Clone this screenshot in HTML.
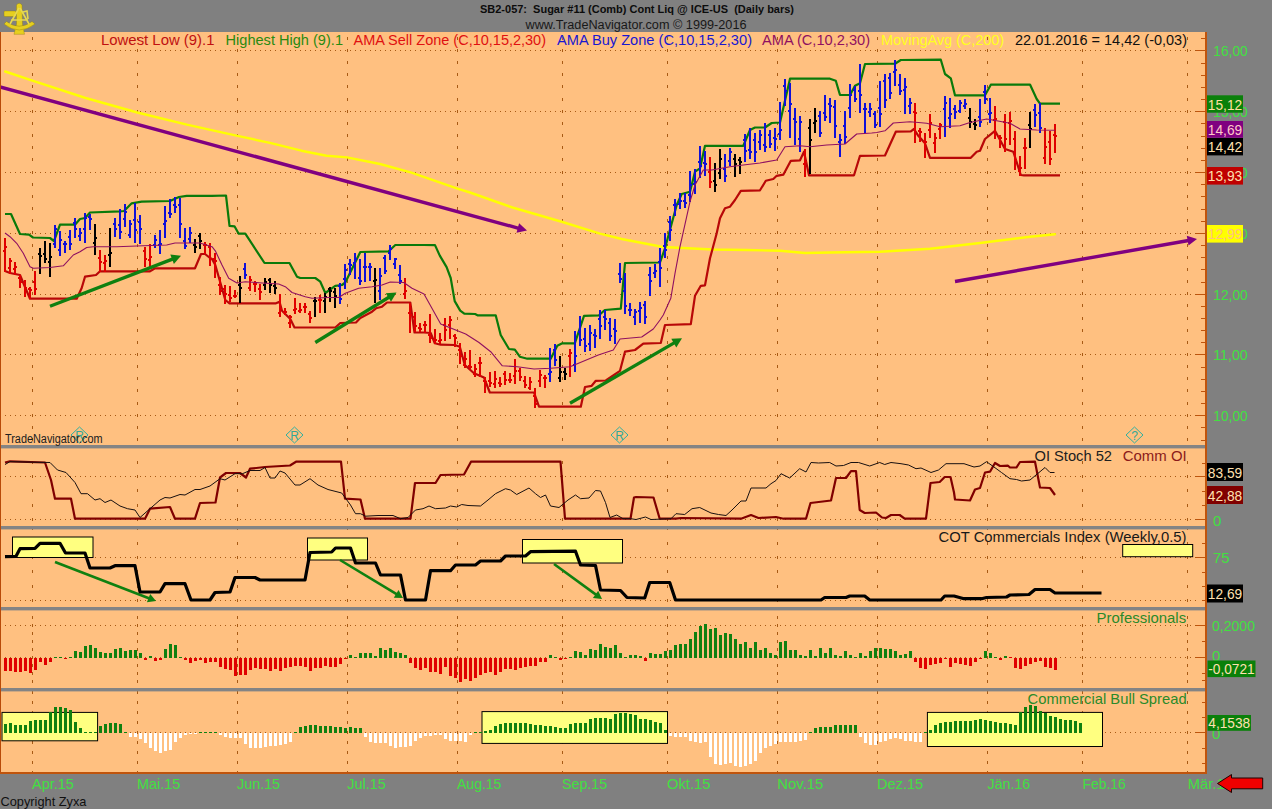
<!DOCTYPE html>
<html><head><meta charset="utf-8"><title>SB2-057: Sugar #11 (Comb) Cont Liq @ ICE-US (Daily bars)</title>
<style>html,body{margin:0;padding:0;background:#808080;overflow:hidden}svg{display:block}</style></head>
<body>
<svg width="1272" height="809" viewBox="0 0 1272 809" font-family="'Liberation Sans', Arial, sans-serif">
<rect width="1272" height="809" fill="#808080"/>
<rect x="0" y="32" width="1207" height="741" fill="#ffc080"/>
<path d="M32.5 36.84V445 M137.5 36.84V445 M237.5 36.84V445 M347.5 36.84V445 M457.5 36.84V445 M562.5 36.84V445 M667.5 36.84V445 M777.5 36.84V445 M877.5 36.84V445 M987.5 36.84V445 M1082.5 36.84V445 M1187.5 36.84V445" stroke="#a85a14" stroke-width="1" stroke-dasharray="3 9.16" fill="none" shape-rendering="crispEdges"/>
<path d="M32.5 460.7V526 M137.5 460.7V526 M237.5 460.7V526 M347.5 460.7V526 M457.5 460.7V526 M562.5 460.7V526 M667.5 460.7V526 M777.5 460.7V526 M877.5 460.7V526 M987.5 460.7V526 M1082.5 460.7V526 M1187.5 460.7V526" stroke="#a85a14" stroke-width="1" stroke-dasharray="3 11.33" fill="none" shape-rendering="crispEdges"/>
<path d="M32.5 527.37V607 M137.5 527.37V607 M237.5 527.37V607 M347.5 527.37V607 M457.5 527.37V607 M562.5 527.37V607 M667.5 527.37V607 M777.5 527.37V607 M877.5 527.37V607 M987.5 527.37V607 M1082.5 527.37V607 M1187.5 527.37V607" stroke="#a85a14" stroke-width="1" stroke-dasharray="3 11.33" fill="none" shape-rendering="crispEdges"/>
<path d="M32.5 616V688 M137.5 616V688 M237.5 616V688 M347.5 616V688 M457.5 616V688 M562.5 616V688 M667.5 616V688 M777.5 616V688 M877.5 616V688 M987.5 616V688 M1082.5 616V688 M1187.5 616V688" stroke="#a85a14" stroke-width="1" stroke-dasharray="3 5" fill="none" shape-rendering="crispEdges"/>
<path d="M32.5 691V772 M137.5 691V772 M237.5 691V772 M347.5 691V772 M457.5 691V772 M562.5 691V772 M667.5 691V772 M777.5 691V772 M877.5 691V772 M987.5 691V772 M1082.5 691V772 M1187.5 691V772" stroke="#a85a14" stroke-width="1" stroke-dasharray="3 7" fill="none" shape-rendering="crispEdges"/>
<path d="M5 50.5H1200 M5 111.5H1200 M5 172.5H1200 M5 233.5H1200 M5 294.5H1200 M5 354.5H1200 M5 415.5H1200 M5 476.5H1200 M5 519.5H1200 M5 557.5H1200 M5 600.5H1200 M5 625.5H1200 M5 657.5H1200 M5 732.5H1200" stroke="#a85a14" stroke-width="1" stroke-dasharray="1 4" fill="none" shape-rendering="crispEdges"/>
<rect x="0" y="445" width="1206" height="3.4" fill="#848484"/>
<rect x="0" y="526" width="1206" height="3.4" fill="#848484"/>
<rect x="0" y="607" width="1206" height="3.4" fill="#848484"/>
<rect x="0" y="688" width="1206" height="3.4" fill="#848484"/>
<rect x="12.5" y="537.0" width="80.5" height="20.5" fill="#ffff80" stroke="#000" stroke-width="1"/>
<rect x="307.5" y="538.0" width="60.0" height="22.0" fill="#ffff80" stroke="#000" stroke-width="1"/>
<rect x="522.5" y="539.5" width="100.0" height="23.5" fill="#ffff80" stroke="#000" stroke-width="1"/>
<rect x="1122.7" y="544.5" width="70.0" height="12.2" fill="#ffff80" stroke="#000" stroke-width="1"/>
<rect x="2.0" y="712.4" width="95.6" height="28.4" fill="#ffff80" stroke="#000" stroke-width="1"/>
<rect x="482.0" y="711.6" width="185.5" height="31.8" fill="#ffff80" stroke="#000" stroke-width="1"/>
<rect x="927.4" y="712.4" width="175.1" height="34.1" fill="#ffff80" stroke="#000" stroke-width="1"/>
<g shape-rendering="crispEdges">
<rect x="4" y="657.5" width="3" height="13.0" fill="#e00000"/>
<rect x="9" y="657.5" width="3" height="13.0" fill="#e00000"/>
<rect x="14" y="657.5" width="3" height="14.0" fill="#e00000"/>
<rect x="19" y="657.5" width="3" height="14.0" fill="#e00000"/>
<rect x="24" y="657.5" width="3" height="13.5" fill="#e00000"/>
<rect x="29" y="657.5" width="3" height="15.5" fill="#e00000"/>
<rect x="34" y="657.5" width="3" height="12.5" fill="#e00000"/>
<rect x="39" y="657.5" width="3" height="4.0" fill="#e00000"/>
<rect x="44" y="657.5" width="3" height="7.0" fill="#e00000"/>
<rect x="49" y="657.5" width="3" height="4.5" fill="#e00000"/>
<rect x="54" y="657.0" width="3" height="1" fill="#108010"/>
<rect x="59" y="657.0" width="3" height="1" fill="#108010"/>
<rect x="64" y="657.5" width="3" height="1.0" fill="#e00000"/>
<rect x="69" y="657.0" width="3" height="1" fill="#108010"/>
<rect x="74" y="650.5" width="3" height="7.0" fill="#108010"/>
<rect x="79" y="652.0" width="3" height="5.5" fill="#108010"/>
<rect x="84" y="646.0" width="3" height="11.5" fill="#108010"/>
<rect x="89" y="644.5" width="3" height="13.0" fill="#108010"/>
<rect x="94" y="647.5" width="3" height="10.0" fill="#108010"/>
<rect x="99" y="652.0" width="3" height="5.5" fill="#108010"/>
<rect x="104" y="653.0" width="3" height="4.5" fill="#108010"/>
<rect x="109" y="652.5" width="3" height="5.0" fill="#108010"/>
<rect x="114" y="648.5" width="3" height="9.0" fill="#108010"/>
<rect x="119" y="647.5" width="3" height="10.0" fill="#108010"/>
<rect x="124" y="650.5" width="3" height="7.0" fill="#108010"/>
<rect x="129" y="649.5" width="3" height="8.0" fill="#108010"/>
<rect x="134" y="649.5" width="3" height="8.0" fill="#108010"/>
<rect x="139" y="653.0" width="3" height="4.5" fill="#108010"/>
<rect x="144" y="657.5" width="3" height="2.0" fill="#e00000"/>
<rect x="149" y="655.5" width="3" height="2.0" fill="#108010"/>
<rect x="154" y="657.5" width="3" height="3.0" fill="#e00000"/>
<rect x="159" y="657.5" width="3" height="2.5" fill="#e00000"/>
<rect x="164" y="648.5" width="3" height="9.0" fill="#108010"/>
<rect x="169" y="643.5" width="3" height="14.0" fill="#108010"/>
<rect x="174" y="644.5" width="3" height="13.0" fill="#108010"/>
<rect x="179" y="656.5" width="3" height="1.0" fill="#108010"/>
<rect x="184" y="657.5" width="3" height="2.5" fill="#e00000"/>
<rect x="189" y="657.5" width="3" height="5.0" fill="#e00000"/>
<rect x="194" y="657.5" width="3" height="3.0" fill="#e00000"/>
<rect x="199" y="657.5" width="3" height="2.5" fill="#e00000"/>
<rect x="204" y="657.5" width="3" height="5.0" fill="#e00000"/>
<rect x="209" y="657.5" width="3" height="4.5" fill="#e00000"/>
<rect x="214" y="657.5" width="3" height="4.0" fill="#e00000"/>
<rect x="219" y="657.5" width="3" height="9.0" fill="#e00000"/>
<rect x="224" y="657.5" width="3" height="11.5" fill="#e00000"/>
<rect x="229" y="657.5" width="3" height="12.5" fill="#e00000"/>
<rect x="234" y="657.5" width="3" height="18.0" fill="#e00000"/>
<rect x="239" y="657.5" width="3" height="17.0" fill="#e00000"/>
<rect x="244" y="657.5" width="3" height="17.0" fill="#e00000"/>
<rect x="249" y="657.5" width="3" height="12.5" fill="#e00000"/>
<rect x="254" y="657.5" width="3" height="10.0" fill="#e00000"/>
<rect x="259" y="657.5" width="3" height="11.5" fill="#e00000"/>
<rect x="264" y="657.5" width="3" height="11.5" fill="#e00000"/>
<rect x="269" y="657.5" width="3" height="13.0" fill="#e00000"/>
<rect x="274" y="657.5" width="3" height="11.0" fill="#e00000"/>
<rect x="279" y="657.5" width="3" height="13.0" fill="#e00000"/>
<rect x="284" y="657.5" width="3" height="10.0" fill="#e00000"/>
<rect x="289" y="657.5" width="3" height="9.0" fill="#e00000"/>
<rect x="294" y="657.5" width="3" height="8.0" fill="#e00000"/>
<rect x="299" y="657.5" width="3" height="8.0" fill="#e00000"/>
<rect x="304" y="657.5" width="3" height="9.0" fill="#e00000"/>
<rect x="309" y="657.5" width="3" height="13.0" fill="#e00000"/>
<rect x="314" y="657.5" width="3" height="10.0" fill="#e00000"/>
<rect x="319" y="657.5" width="3" height="10.0" fill="#e00000"/>
<rect x="324" y="657.5" width="3" height="8.0" fill="#e00000"/>
<rect x="329" y="657.5" width="3" height="9.0" fill="#e00000"/>
<rect x="334" y="657.5" width="3" height="9.0" fill="#e00000"/>
<rect x="339" y="657.5" width="3" height="6.5" fill="#e00000"/>
<rect x="344" y="657.5" width="3" height="1.0" fill="#e00000"/>
<rect x="349" y="654.5" width="3" height="3.0" fill="#108010"/>
<rect x="354" y="656.5" width="3" height="1.0" fill="#108010"/>
<rect x="359" y="652.5" width="3" height="5.0" fill="#108010"/>
<rect x="364" y="652.5" width="3" height="5.0" fill="#108010"/>
<rect x="369" y="652.5" width="3" height="5.0" fill="#108010"/>
<rect x="374" y="655.5" width="3" height="2.0" fill="#108010"/>
<rect x="379" y="647.5" width="3" height="10.0" fill="#108010"/>
<rect x="384" y="649.5" width="3" height="8.0" fill="#108010"/>
<rect x="389" y="647.5" width="3" height="10.0" fill="#108010"/>
<rect x="394" y="651.5" width="3" height="6.0" fill="#108010"/>
<rect x="399" y="652.5" width="3" height="5.0" fill="#108010"/>
<rect x="404" y="655.0" width="3" height="2.5" fill="#108010"/>
<rect x="409" y="657.5" width="3" height="5.0" fill="#e00000"/>
<rect x="414" y="657.5" width="3" height="10.0" fill="#e00000"/>
<rect x="419" y="657.5" width="3" height="12.5" fill="#e00000"/>
<rect x="424" y="657.5" width="3" height="10.0" fill="#e00000"/>
<rect x="429" y="657.5" width="3" height="14.0" fill="#e00000"/>
<rect x="434" y="657.5" width="3" height="14.0" fill="#e00000"/>
<rect x="439" y="657.5" width="3" height="16.0" fill="#e00000"/>
<rect x="444" y="657.5" width="3" height="9.0" fill="#e00000"/>
<rect x="449" y="657.5" width="3" height="18.0" fill="#e00000"/>
<rect x="454" y="657.5" width="3" height="20.0" fill="#e00000"/>
<rect x="459" y="657.5" width="3" height="24.5" fill="#e00000"/>
<rect x="464" y="657.5" width="3" height="21.0" fill="#e00000"/>
<rect x="469" y="657.5" width="3" height="23.0" fill="#e00000"/>
<rect x="474" y="657.5" width="3" height="20.0" fill="#e00000"/>
<rect x="479" y="657.5" width="3" height="17.0" fill="#e00000"/>
<rect x="484" y="657.5" width="3" height="15.5" fill="#e00000"/>
<rect x="489" y="657.5" width="3" height="14.0" fill="#e00000"/>
<rect x="494" y="657.5" width="3" height="17.5" fill="#e00000"/>
<rect x="499" y="657.5" width="3" height="14.0" fill="#e00000"/>
<rect x="504" y="657.5" width="3" height="11.0" fill="#e00000"/>
<rect x="509" y="657.5" width="3" height="11.0" fill="#e00000"/>
<rect x="514" y="657.5" width="3" height="12.5" fill="#e00000"/>
<rect x="519" y="657.5" width="3" height="10.0" fill="#e00000"/>
<rect x="524" y="657.5" width="3" height="9.0" fill="#e00000"/>
<rect x="529" y="657.5" width="3" height="8.0" fill="#e00000"/>
<rect x="534" y="657.5" width="3" height="8.0" fill="#e00000"/>
<rect x="539" y="657.5" width="3" height="4.0" fill="#e00000"/>
<rect x="544" y="657.5" width="3" height="4.5" fill="#e00000"/>
<rect x="549" y="655.0" width="3" height="2.5" fill="#108010"/>
<rect x="554" y="656.5" width="3" height="1.0" fill="#108010"/>
<rect x="559" y="657.5" width="3" height="2.0" fill="#e00000"/>
<rect x="564" y="657.5" width="3" height="1.0" fill="#e00000"/>
<rect x="569" y="656.5" width="3" height="1.0" fill="#108010"/>
<rect x="574" y="651.0" width="3" height="6.5" fill="#108010"/>
<rect x="579" y="652.0" width="3" height="5.5" fill="#108010"/>
<rect x="584" y="654.5" width="3" height="3.0" fill="#108010"/>
<rect x="589" y="648.5" width="3" height="9.0" fill="#108010"/>
<rect x="594" y="649.5" width="3" height="8.0" fill="#108010"/>
<rect x="599" y="643.5" width="3" height="14.0" fill="#108010"/>
<rect x="604" y="646.5" width="3" height="11.0" fill="#108010"/>
<rect x="609" y="647.5" width="3" height="10.0" fill="#108010"/>
<rect x="614" y="645.0" width="3" height="12.5" fill="#108010"/>
<rect x="619" y="652.5" width="3" height="5.0" fill="#108010"/>
<rect x="624" y="656.5" width="3" height="1.0" fill="#108010"/>
<rect x="629" y="654.5" width="3" height="3.0" fill="#108010"/>
<rect x="634" y="654.5" width="3" height="3.0" fill="#108010"/>
<rect x="639" y="655.5" width="3" height="2.0" fill="#108010"/>
<rect x="644" y="657.5" width="3" height="3.0" fill="#e00000"/>
<rect x="649" y="653.0" width="3" height="4.5" fill="#108010"/>
<rect x="654" y="653.5" width="3" height="4.0" fill="#108010"/>
<rect x="659" y="653.5" width="3" height="4.0" fill="#108010"/>
<rect x="664" y="650.5" width="3" height="7.0" fill="#108010"/>
<rect x="669" y="649.5" width="3" height="8.0" fill="#108010"/>
<rect x="674" y="645.0" width="3" height="12.5" fill="#108010"/>
<rect x="679" y="643.5" width="3" height="14.0" fill="#108010"/>
<rect x="684" y="644.0" width="3" height="13.5" fill="#108010"/>
<rect x="689" y="639.0" width="3" height="18.5" fill="#108010"/>
<rect x="694" y="631.5" width="3" height="26.0" fill="#108010"/>
<rect x="699" y="626.0" width="3" height="31.5" fill="#108010"/>
<rect x="704" y="624.0" width="3" height="33.5" fill="#108010"/>
<rect x="709" y="629.0" width="3" height="28.5" fill="#108010"/>
<rect x="714" y="628.0" width="3" height="29.5" fill="#108010"/>
<rect x="719" y="634.5" width="3" height="23.0" fill="#108010"/>
<rect x="724" y="633.0" width="3" height="24.5" fill="#108010"/>
<rect x="729" y="633.5" width="3" height="24.0" fill="#108010"/>
<rect x="734" y="639.0" width="3" height="18.5" fill="#108010"/>
<rect x="739" y="643.5" width="3" height="14.0" fill="#108010"/>
<rect x="744" y="641.5" width="3" height="16.0" fill="#108010"/>
<rect x="749" y="647.5" width="3" height="10.0" fill="#108010"/>
<rect x="754" y="642.0" width="3" height="15.5" fill="#108010"/>
<rect x="759" y="649.5" width="3" height="8.0" fill="#108010"/>
<rect x="764" y="647.5" width="3" height="10.0" fill="#108010"/>
<rect x="769" y="653.0" width="3" height="4.5" fill="#108010"/>
<rect x="774" y="654.5" width="3" height="3.0" fill="#108010"/>
<rect x="779" y="642.0" width="3" height="15.5" fill="#108010"/>
<rect x="784" y="640.5" width="3" height="17.0" fill="#108010"/>
<rect x="789" y="649.5" width="3" height="8.0" fill="#108010"/>
<rect x="794" y="649.5" width="3" height="8.0" fill="#108010"/>
<rect x="799" y="654.5" width="3" height="3.0" fill="#108010"/>
<rect x="804" y="655.5" width="3" height="2.0" fill="#108010"/>
<rect x="809" y="649.5" width="3" height="8.0" fill="#108010"/>
<rect x="814" y="655.5" width="3" height="2.0" fill="#108010"/>
<rect x="819" y="647.5" width="3" height="10.0" fill="#108010"/>
<rect x="824" y="652.5" width="3" height="5.0" fill="#108010"/>
<rect x="829" y="647.5" width="3" height="10.0" fill="#108010"/>
<rect x="834" y="655.0" width="3" height="2.5" fill="#108010"/>
<rect x="839" y="655.5" width="3" height="2.0" fill="#108010"/>
<rect x="844" y="651.0" width="3" height="6.5" fill="#108010"/>
<rect x="849" y="654.5" width="3" height="3.0" fill="#108010"/>
<rect x="854" y="657.0" width="3" height="1" fill="#108010"/>
<rect x="859" y="652.5" width="3" height="5.0" fill="#108010"/>
<rect x="864" y="655.5" width="3" height="2.0" fill="#108010"/>
<rect x="869" y="651.0" width="3" height="6.5" fill="#108010"/>
<rect x="874" y="647.5" width="3" height="10.0" fill="#108010"/>
<rect x="879" y="647.5" width="3" height="10.0" fill="#108010"/>
<rect x="884" y="648.5" width="3" height="9.0" fill="#108010"/>
<rect x="889" y="648.5" width="3" height="9.0" fill="#108010"/>
<rect x="894" y="650.5" width="3" height="7.0" fill="#108010"/>
<rect x="899" y="654.5" width="3" height="3.0" fill="#108010"/>
<rect x="904" y="653.5" width="3" height="4.0" fill="#108010"/>
<rect x="909" y="651.0" width="3" height="6.5" fill="#108010"/>
<rect x="914" y="657.5" width="3" height="4.5" fill="#e00000"/>
<rect x="919" y="657.5" width="3" height="10.0" fill="#e00000"/>
<rect x="924" y="657.5" width="3" height="11.5" fill="#e00000"/>
<rect x="929" y="657.5" width="3" height="7.0" fill="#e00000"/>
<rect x="934" y="657.5" width="3" height="6.5" fill="#e00000"/>
<rect x="939" y="657.5" width="3" height="5.5" fill="#e00000"/>
<rect x="944" y="657.5" width="3" height="1.0" fill="#e00000"/>
<rect x="949" y="657.5" width="3" height="9.0" fill="#e00000"/>
<rect x="954" y="657.5" width="3" height="5.5" fill="#e00000"/>
<rect x="959" y="657.5" width="3" height="6.5" fill="#e00000"/>
<rect x="964" y="657.5" width="3" height="7.0" fill="#e00000"/>
<rect x="969" y="657.5" width="3" height="8.0" fill="#e00000"/>
<rect x="974" y="657.5" width="3" height="4.5" fill="#e00000"/>
<rect x="979" y="657.5" width="3" height="1.0" fill="#e00000"/>
<rect x="984" y="651.0" width="3" height="6.5" fill="#108010"/>
<rect x="989" y="653.0" width="3" height="4.5" fill="#108010"/>
<rect x="994" y="657.0" width="3" height="1" fill="#108010"/>
<rect x="999" y="657.5" width="3" height="2.0" fill="#e00000"/>
<rect x="1004" y="655.5" width="3" height="2.0" fill="#108010"/>
<rect x="1009" y="657.0" width="3" height="1" fill="#e00000"/>
<rect x="1014" y="657.5" width="3" height="10.0" fill="#e00000"/>
<rect x="1019" y="657.5" width="3" height="11.5" fill="#e00000"/>
<rect x="1024" y="657.5" width="3" height="8.0" fill="#e00000"/>
<rect x="1029" y="657.5" width="3" height="6.5" fill="#e00000"/>
<rect x="1034" y="657.5" width="3" height="4.0" fill="#e00000"/>
<rect x="1039" y="657.5" width="3" height="3.0" fill="#e00000"/>
<rect x="1044" y="657.5" width="3" height="9.0" fill="#e00000"/>
<rect x="1049" y="657.5" width="3" height="10.0" fill="#e00000"/>
<rect x="1054" y="657.5" width="3" height="12.5" fill="#e00000"/>
<rect x="4" y="723.5" width="3" height="9.0" fill="#108010"/>
<rect x="9" y="722.5" width="3" height="10.0" fill="#108010"/>
<rect x="14" y="724.5" width="3" height="8.0" fill="#108010"/>
<rect x="19" y="724.5" width="3" height="8.0" fill="#108010"/>
<rect x="24" y="724.5" width="3" height="8.0" fill="#108010"/>
<rect x="29" y="721.0" width="3" height="11.5" fill="#108010"/>
<rect x="34" y="720.0" width="3" height="12.5" fill="#108010"/>
<rect x="39" y="720.0" width="3" height="12.5" fill="#108010"/>
<rect x="44" y="720.0" width="3" height="12.5" fill="#108010"/>
<rect x="49" y="712.0" width="3" height="20.5" fill="#108010"/>
<rect x="54" y="706.5" width="3" height="26.0" fill="#108010"/>
<rect x="59" y="706.5" width="3" height="26.0" fill="#108010"/>
<rect x="64" y="708.0" width="3" height="24.5" fill="#108010"/>
<rect x="69" y="709.5" width="3" height="23.0" fill="#108010"/>
<rect x="74" y="721.5" width="3" height="11.0" fill="#108010"/>
<rect x="79" y="728.0" width="3" height="4.5" fill="#108010"/>
<rect x="84" y="731.5" width="3" height="1.0" fill="#108010"/>
<rect x="89" y="732.0" width="3" height="1" fill="#108010"/>
<rect x="94" y="732.0" width="3" height="1" fill="#108010"/>
<rect x="99" y="725.5" width="3" height="7.0" fill="#108010"/>
<rect x="104" y="723.5" width="3" height="9.0" fill="#108010"/>
<rect x="109" y="722.5" width="3" height="10.0" fill="#108010"/>
<rect x="114" y="722.5" width="3" height="10.0" fill="#108010"/>
<rect x="119" y="723.5" width="3" height="9.0" fill="#108010"/>
<rect x="124" y="732.0" width="3" height="1" fill="#108010"/>
<rect x="129" y="732.5" width="3" height="4.0" fill="#ffffff"/>
<rect x="134" y="732.5" width="3" height="4.5" fill="#ffffff"/>
<rect x="139" y="732.5" width="3" height="6.5" fill="#ffffff"/>
<rect x="144" y="732.5" width="3" height="10.0" fill="#ffffff"/>
<rect x="149" y="732.5" width="3" height="15.5" fill="#ffffff"/>
<rect x="154" y="732.5" width="3" height="18.5" fill="#ffffff"/>
<rect x="159" y="732.5" width="3" height="20.0" fill="#ffffff"/>
<rect x="164" y="732.5" width="3" height="18.5" fill="#ffffff"/>
<rect x="169" y="732.5" width="3" height="17.5" fill="#ffffff"/>
<rect x="174" y="732.5" width="3" height="9.0" fill="#ffffff"/>
<rect x="179" y="732.5" width="3" height="5.0" fill="#ffffff"/>
<rect x="184" y="732.5" width="3" height="2.0" fill="#ffffff"/>
<rect x="189" y="732.5" width="3" height="1.0" fill="#ffffff"/>
<rect x="194" y="732.5" width="3" height="1.0" fill="#ffffff"/>
<rect x="199" y="732.0" width="3" height="1" fill="#108010"/>
<rect x="204" y="732.0" width="3" height="1" fill="#108010"/>
<rect x="209" y="732.0" width="3" height="1" fill="#108010"/>
<rect x="214" y="732.0" width="3" height="1" fill="#108010"/>
<rect x="219" y="732.5" width="3" height="2.5" fill="#ffffff"/>
<rect x="224" y="732.5" width="3" height="4.5" fill="#ffffff"/>
<rect x="229" y="732.5" width="3" height="5.0" fill="#ffffff"/>
<rect x="234" y="732.5" width="3" height="5.0" fill="#ffffff"/>
<rect x="239" y="732.5" width="3" height="5.0" fill="#ffffff"/>
<rect x="244" y="732.5" width="3" height="11.5" fill="#ffffff"/>
<rect x="249" y="732.5" width="3" height="15.0" fill="#ffffff"/>
<rect x="254" y="732.5" width="3" height="15.0" fill="#ffffff"/>
<rect x="259" y="732.5" width="3" height="15.0" fill="#ffffff"/>
<rect x="264" y="732.5" width="3" height="14.0" fill="#ffffff"/>
<rect x="269" y="732.5" width="3" height="13.5" fill="#ffffff"/>
<rect x="274" y="732.5" width="3" height="13.0" fill="#ffffff"/>
<rect x="279" y="732.5" width="3" height="12.5" fill="#ffffff"/>
<rect x="284" y="732.5" width="3" height="11.0" fill="#ffffff"/>
<rect x="289" y="732.5" width="3" height="9.0" fill="#ffffff"/>
<rect x="294" y="732.0" width="3" height="1" fill="#108010"/>
<rect x="299" y="727.0" width="3" height="5.5" fill="#108010"/>
<rect x="304" y="725.5" width="3" height="7.0" fill="#108010"/>
<rect x="309" y="724.5" width="3" height="8.0" fill="#108010"/>
<rect x="314" y="724.5" width="3" height="8.0" fill="#108010"/>
<rect x="319" y="725.5" width="3" height="7.0" fill="#108010"/>
<rect x="324" y="726.0" width="3" height="6.5" fill="#108010"/>
<rect x="329" y="726.0" width="3" height="6.5" fill="#108010"/>
<rect x="334" y="727.0" width="3" height="5.5" fill="#108010"/>
<rect x="339" y="727.0" width="3" height="5.5" fill="#108010"/>
<rect x="344" y="727.5" width="3" height="5.0" fill="#108010"/>
<rect x="349" y="727.0" width="3" height="5.5" fill="#108010"/>
<rect x="354" y="728.0" width="3" height="4.5" fill="#108010"/>
<rect x="359" y="728.0" width="3" height="4.5" fill="#108010"/>
<rect x="364" y="732.5" width="3" height="4.5" fill="#ffffff"/>
<rect x="369" y="732.5" width="3" height="9.0" fill="#ffffff"/>
<rect x="374" y="732.5" width="3" height="10.0" fill="#ffffff"/>
<rect x="379" y="732.5" width="3" height="10.0" fill="#ffffff"/>
<rect x="384" y="732.5" width="3" height="10.0" fill="#ffffff"/>
<rect x="389" y="732.5" width="3" height="13.5" fill="#ffffff"/>
<rect x="394" y="732.5" width="3" height="15.0" fill="#ffffff"/>
<rect x="399" y="732.5" width="3" height="14.0" fill="#ffffff"/>
<rect x="404" y="732.5" width="3" height="14.0" fill="#ffffff"/>
<rect x="409" y="732.5" width="3" height="13.5" fill="#ffffff"/>
<rect x="414" y="732.5" width="3" height="8.0" fill="#ffffff"/>
<rect x="419" y="732.5" width="3" height="5.0" fill="#ffffff"/>
<rect x="424" y="732.5" width="3" height="3.0" fill="#ffffff"/>
<rect x="429" y="732.5" width="3" height="3.0" fill="#ffffff"/>
<rect x="434" y="732.5" width="3" height="2.0" fill="#ffffff"/>
<rect x="439" y="732.5" width="3" height="2.0" fill="#ffffff"/>
<rect x="444" y="732.5" width="3" height="6.5" fill="#ffffff"/>
<rect x="449" y="732.5" width="3" height="8.0" fill="#ffffff"/>
<rect x="454" y="732.5" width="3" height="8.0" fill="#ffffff"/>
<rect x="459" y="732.5" width="3" height="8.0" fill="#ffffff"/>
<rect x="464" y="732.5" width="3" height="9.0" fill="#ffffff"/>
<rect x="469" y="732.5" width="3" height="2.0" fill="#ffffff"/>
<rect x="474" y="732.0" width="3" height="1" fill="#108010"/>
<rect x="479" y="731.5" width="3" height="1.0" fill="#108010"/>
<rect x="484" y="730.5" width="3" height="2.0" fill="#108010"/>
<rect x="489" y="730.0" width="3" height="2.5" fill="#108010"/>
<rect x="494" y="725.5" width="3" height="7.0" fill="#108010"/>
<rect x="499" y="723.5" width="3" height="9.0" fill="#108010"/>
<rect x="504" y="722.5" width="3" height="10.0" fill="#108010"/>
<rect x="509" y="722.5" width="3" height="10.0" fill="#108010"/>
<rect x="514" y="722.5" width="3" height="10.0" fill="#108010"/>
<rect x="519" y="722.5" width="3" height="10.0" fill="#108010"/>
<rect x="524" y="722.5" width="3" height="10.0" fill="#108010"/>
<rect x="529" y="723.5" width="3" height="9.0" fill="#108010"/>
<rect x="534" y="724.5" width="3" height="8.0" fill="#108010"/>
<rect x="539" y="724.5" width="3" height="8.0" fill="#108010"/>
<rect x="544" y="725.5" width="3" height="7.0" fill="#108010"/>
<rect x="549" y="726.0" width="3" height="6.5" fill="#108010"/>
<rect x="554" y="727.0" width="3" height="5.5" fill="#108010"/>
<rect x="559" y="728.0" width="3" height="4.5" fill="#108010"/>
<rect x="564" y="727.5" width="3" height="5.0" fill="#108010"/>
<rect x="569" y="723.5" width="3" height="9.0" fill="#108010"/>
<rect x="574" y="722.5" width="3" height="10.0" fill="#108010"/>
<rect x="579" y="722.5" width="3" height="10.0" fill="#108010"/>
<rect x="584" y="722.5" width="3" height="10.0" fill="#108010"/>
<rect x="589" y="719.0" width="3" height="13.5" fill="#108010"/>
<rect x="594" y="717.5" width="3" height="15.0" fill="#108010"/>
<rect x="599" y="717.5" width="3" height="15.0" fill="#108010"/>
<rect x="604" y="717.5" width="3" height="15.0" fill="#108010"/>
<rect x="609" y="718.5" width="3" height="14.0" fill="#108010"/>
<rect x="614" y="714.0" width="3" height="18.5" fill="#108010"/>
<rect x="619" y="713.0" width="3" height="19.5" fill="#108010"/>
<rect x="624" y="713.0" width="3" height="19.5" fill="#108010"/>
<rect x="629" y="714.0" width="3" height="18.5" fill="#108010"/>
<rect x="634" y="715.0" width="3" height="17.5" fill="#108010"/>
<rect x="639" y="718.5" width="3" height="14.0" fill="#108010"/>
<rect x="644" y="719.0" width="3" height="13.5" fill="#108010"/>
<rect x="649" y="720.0" width="3" height="12.5" fill="#108010"/>
<rect x="654" y="721.5" width="3" height="11.0" fill="#108010"/>
<rect x="659" y="722.5" width="3" height="10.0" fill="#108010"/>
<rect x="664" y="730.0" width="3" height="2.5" fill="#108010"/>
<rect x="669" y="732.5" width="3" height="3.0" fill="#ffffff"/>
<rect x="674" y="732.5" width="3" height="4.0" fill="#ffffff"/>
<rect x="679" y="732.5" width="3" height="4.0" fill="#ffffff"/>
<rect x="684" y="732.5" width="3" height="4.5" fill="#ffffff"/>
<rect x="689" y="732.5" width="3" height="8.0" fill="#ffffff"/>
<rect x="694" y="732.5" width="3" height="9.0" fill="#ffffff"/>
<rect x="699" y="732.5" width="3" height="10.0" fill="#ffffff"/>
<rect x="704" y="732.5" width="3" height="9.0" fill="#ffffff"/>
<rect x="709" y="732.5" width="3" height="24.5" fill="#ffffff"/>
<rect x="714" y="732.5" width="3" height="31.0" fill="#ffffff"/>
<rect x="719" y="732.5" width="3" height="32.0" fill="#ffffff"/>
<rect x="724" y="732.5" width="3" height="31.0" fill="#ffffff"/>
<rect x="729" y="732.5" width="3" height="30.5" fill="#ffffff"/>
<rect x="734" y="732.5" width="3" height="33.5" fill="#ffffff"/>
<rect x="739" y="732.5" width="3" height="34.0" fill="#ffffff"/>
<rect x="744" y="732.5" width="3" height="33.0" fill="#ffffff"/>
<rect x="749" y="732.5" width="3" height="31.0" fill="#ffffff"/>
<rect x="754" y="732.5" width="3" height="28.5" fill="#ffffff"/>
<rect x="759" y="732.5" width="3" height="20.5" fill="#ffffff"/>
<rect x="764" y="732.5" width="3" height="15.0" fill="#ffffff"/>
<rect x="769" y="732.5" width="3" height="13.0" fill="#ffffff"/>
<rect x="774" y="732.5" width="3" height="11.0" fill="#ffffff"/>
<rect x="779" y="732.5" width="3" height="9.0" fill="#ffffff"/>
<rect x="784" y="732.5" width="3" height="9.0" fill="#ffffff"/>
<rect x="789" y="732.5" width="3" height="9.0" fill="#ffffff"/>
<rect x="794" y="732.5" width="3" height="9.0" fill="#ffffff"/>
<rect x="799" y="732.5" width="3" height="8.0" fill="#ffffff"/>
<rect x="804" y="732.5" width="3" height="7.0" fill="#ffffff"/>
<rect x="809" y="732.0" width="3" height="1" fill="#108010"/>
<rect x="814" y="728.0" width="3" height="4.5" fill="#108010"/>
<rect x="819" y="727.0" width="3" height="5.5" fill="#108010"/>
<rect x="824" y="727.0" width="3" height="5.5" fill="#108010"/>
<rect x="829" y="727.0" width="3" height="5.5" fill="#108010"/>
<rect x="834" y="724.5" width="3" height="8.0" fill="#108010"/>
<rect x="839" y="724.5" width="3" height="8.0" fill="#108010"/>
<rect x="844" y="724.5" width="3" height="8.0" fill="#108010"/>
<rect x="849" y="724.5" width="3" height="8.0" fill="#108010"/>
<rect x="854" y="724.5" width="3" height="8.0" fill="#108010"/>
<rect x="859" y="732.5" width="3" height="4.0" fill="#ffffff"/>
<rect x="864" y="732.5" width="3" height="10.0" fill="#ffffff"/>
<rect x="869" y="732.5" width="3" height="12.5" fill="#ffffff"/>
<rect x="874" y="732.5" width="3" height="12.5" fill="#ffffff"/>
<rect x="879" y="732.5" width="3" height="9.0" fill="#ffffff"/>
<rect x="884" y="732.5" width="3" height="8.0" fill="#ffffff"/>
<rect x="889" y="732.5" width="3" height="6.5" fill="#ffffff"/>
<rect x="894" y="732.5" width="3" height="5.5" fill="#ffffff"/>
<rect x="899" y="732.5" width="3" height="6.5" fill="#ffffff"/>
<rect x="904" y="732.5" width="3" height="8.0" fill="#ffffff"/>
<rect x="909" y="732.5" width="3" height="8.0" fill="#ffffff"/>
<rect x="914" y="732.5" width="3" height="9.0" fill="#ffffff"/>
<rect x="919" y="732.5" width="3" height="9.0" fill="#ffffff"/>
<rect x="924" y="732.0" width="3" height="1" fill="#108010"/>
<rect x="929" y="729.5" width="3" height="3.0" fill="#108010"/>
<rect x="934" y="724.5" width="3" height="8.0" fill="#108010"/>
<rect x="939" y="722.5" width="3" height="10.0" fill="#108010"/>
<rect x="944" y="721.5" width="3" height="11.0" fill="#108010"/>
<rect x="949" y="721.5" width="3" height="11.0" fill="#108010"/>
<rect x="954" y="721.0" width="3" height="11.5" fill="#108010"/>
<rect x="959" y="721.0" width="3" height="11.5" fill="#108010"/>
<rect x="964" y="721.0" width="3" height="11.5" fill="#108010"/>
<rect x="969" y="721.0" width="3" height="11.5" fill="#108010"/>
<rect x="974" y="720.0" width="3" height="12.5" fill="#108010"/>
<rect x="979" y="719.0" width="3" height="13.5" fill="#108010"/>
<rect x="984" y="720.0" width="3" height="12.5" fill="#108010"/>
<rect x="989" y="721.0" width="3" height="11.5" fill="#108010"/>
<rect x="994" y="721.5" width="3" height="11.0" fill="#108010"/>
<rect x="999" y="722.5" width="3" height="10.0" fill="#108010"/>
<rect x="1004" y="722.5" width="3" height="10.0" fill="#108010"/>
<rect x="1009" y="723.5" width="3" height="9.0" fill="#108010"/>
<rect x="1014" y="724.5" width="3" height="8.0" fill="#108010"/>
<rect x="1019" y="712.0" width="3" height="20.5" fill="#108010"/>
<rect x="1024" y="706.5" width="3" height="26.0" fill="#108010"/>
<rect x="1029" y="704.5" width="3" height="28.0" fill="#108010"/>
<rect x="1034" y="706.0" width="3" height="26.5" fill="#108010"/>
<rect x="1039" y="710.5" width="3" height="22.0" fill="#108010"/>
<rect x="1044" y="712.5" width="3" height="20.0" fill="#108010"/>
<rect x="1049" y="715.5" width="3" height="17.0" fill="#108010"/>
<rect x="1054" y="717.0" width="3" height="15.5" fill="#108010"/>
<rect x="1059" y="718.5" width="3" height="14.0" fill="#108010"/>
<rect x="1064" y="719.5" width="3" height="13.0" fill="#108010"/>
<rect x="1069" y="720.0" width="3" height="12.5" fill="#108010"/>
<rect x="1074" y="721.0" width="3" height="11.5" fill="#108010"/>
<rect x="1079" y="722.5" width="3" height="10.0" fill="#108010"/>
</g>
<polyline points="5.2,71.5 32.4,80.6 85.6,98.0 137.3,112.5 186.9,124.7 237.5,135.9 270.0,142.8 301.4,150.7 326.6,155.8 347.0,157.4 380.0,164.0 411.5,172.7 427.2,178.2 457.5,188.7 470.0,192.5 512.5,207.5 562.5,222.0 600.0,233.6 621.7,239.0 663.0,247.0 713.0,249.5 747.0,250.0 780.0,250.8 805.0,253.0 830.0,252.5 880.0,251.8 930.0,248.8 980.0,243.0 1030.0,236.8 1055.0,234.2" fill="none" stroke="#ffff00" stroke-width="2.4" stroke-linejoin="round" stroke-linecap="round"/>
<polyline points="5.0,214.0 11.0,214.0 20.0,234.0 29.0,234.7 33.0,237.5 50.0,238.0 54.0,241.0 60.0,224.7 75.0,224.7 80.0,219.0 85.0,218.0 90.0,212.5 120.0,211.3 124.0,211.0 131.7,203.3 141.7,201.7 170.0,201.0 179.0,197.0 186.7,195.8 212.0,195.8 226.0,195.5 229.5,225.8 234.5,226.3 238.7,233.7 245.3,233.7 264.5,263.0 289.5,263.0 297.0,276.7 300.3,278.0 315.3,278.0 320.3,281.7 325.3,293.0 335.3,285.8 342.0,285.0 345.3,282.5 360.3,252.0 388.7,251.3 395.3,245.0 424.0,245.0 435.0,245.1 439.8,255.6 446.6,267.1 450.7,278.0 454.7,301.1 460.2,310.6 464.3,313.6 475.1,314.0 477.9,315.4 495.7,315.3 500.7,335.0 509.0,349.0 514.8,349.7 519.8,356.7 527.3,358.7 550.7,358.7 557.3,345.8 562.3,343.3 574.8,343.3 584.0,315.8 599.0,315.3 604.8,310.0 620.8,308.7 625.0,263.0 660.0,262.5 665.0,248.3 676.7,205.0 681.7,194.0 690.0,191.7 695.0,171.7 700.0,168.3 705.0,145.8 743.3,145.8 750.0,130.0 755.0,127.5 765.0,127.5 771.7,123.0 780.0,122.5 790.0,78.7 830.0,78.7 835.8,80.8 840.0,95.0 850.0,95.0 855.0,85.8 860.0,83.3 865.0,64.0 895.0,63.7 900.8,60.0 940.8,59.7 945.0,74.0 950.8,78.3 955.0,95.3 985.0,95.3 990.8,84.7 1030.0,84.5 1036.7,99.0 1040.0,103.7 1060.0,103.7" fill="none" stroke="#0a7a0a" stroke-width="2.2" stroke-linejoin="round"/>
<polyline points="5.0,271.0 10.0,273.0 20.0,275.0 25.0,287.0 30.0,298.7 76.7,298.7 81.7,288.0 85.0,276.7 96.0,275.0 100.0,271.3 150.0,271.3 155.0,268.3 195.0,268.3 201.0,254.0 205.0,254.0 210.0,258.0 212.0,259.0 215.3,265.0 225.3,300.0 229.5,303.3 276.0,303.3 279.5,301.7 282.0,310.8 290.3,319.0 294.5,327.5 335.3,327.5 340.3,323.0 356.0,322.5 360.3,318.0 372.0,311.7 376.0,308.3 382.0,306.7 387.0,302.5 410.3,302.5 414.5,332.5 424.0,332.5 430.7,333.0 434.8,343.3 440.7,344.7 454.8,345.0 459.8,346.7 464.8,365.0 474.0,373.3 484.0,377.5 489.8,392.5 534.0,392.5 539.0,406.7 580.8,406.7 585.0,387.0 591.7,385.8 595.8,380.8 605.8,380.5 620.0,370.8 625.0,351.7 635.0,350.0 643.3,343.7 660.8,343.0 665.0,325.0 690.8,324.2 695.0,295.8 700.8,285.8 705.0,285.3 710.0,258.3 716.7,233.3 720.0,218.3 725.0,208.3 730.0,206.7 735.0,200.0 740.8,190.8 760.0,190.3 765.8,180.8 773.3,179.0 776.7,175.8 783.3,174.7 790.8,160.8 800.0,160.3 804.0,151.7 809.0,175.3 854.0,175.3 860.0,155.8 885.0,155.5 895.8,131.7 910.8,131.3 914.0,129.0 918.3,135.8 925.0,143.3 930.0,157.8 970.8,157.8 976.7,151.7 980.0,150.8 985.0,139.0 995.0,130.8 1005.0,149.0 1013.3,151.7 1020.8,175.0 1024.0,175.3 1060.0,175.3" fill="none" stroke="#b80808" stroke-width="2.2" stroke-linejoin="round"/>
<g shape-rendering="crispEdges">
<rect x="4" y="238.0" width="2" height="34.0" fill="#e00000"/>
<rect x="3" y="249.8" width="1" height="2" fill="#e00000"/>
<rect x="6" y="245.7" width="1" height="2" fill="#e00000"/>
<rect x="9" y="258.0" width="2" height="16.0" fill="#e00000"/>
<rect x="8" y="266.7" width="1" height="2" fill="#e00000"/>
<rect x="11" y="260.2" width="1" height="2" fill="#e00000"/>
<rect x="14" y="262.0" width="2" height="13.0" fill="#e00000"/>
<rect x="13" y="267.8" width="1" height="2" fill="#e00000"/>
<rect x="16" y="266.3" width="1" height="2" fill="#e00000"/>
<rect x="19" y="275.0" width="2" height="13.0" fill="#e00000"/>
<rect x="18" y="276.5" width="1" height="2" fill="#e00000"/>
<rect x="21" y="280.6" width="1" height="2" fill="#e00000"/>
<rect x="24" y="280.0" width="2" height="17.0" fill="#e00000"/>
<rect x="23" y="282.0" width="1" height="2" fill="#e00000"/>
<rect x="26" y="286.7" width="1" height="2" fill="#e00000"/>
<rect x="29" y="287.0" width="2" height="12.0" fill="#e00000"/>
<rect x="28" y="288.4" width="1" height="2" fill="#e00000"/>
<rect x="31" y="288.6" width="1" height="2" fill="#e00000"/>
<rect x="34" y="271.0" width="2" height="24.0" fill="#e00000"/>
<rect x="33" y="280.7" width="1" height="2" fill="#e00000"/>
<rect x="36" y="287.5" width="1" height="2" fill="#e00000"/>
<rect x="39" y="247.5" width="2" height="26.5" fill="#000000"/>
<rect x="38" y="252.8" width="1" height="2" fill="#000000"/>
<rect x="41" y="254.6" width="1" height="2" fill="#000000"/>
<rect x="44" y="241.0" width="2" height="22.0" fill="#000000"/>
<rect x="43" y="253.0" width="1" height="2" fill="#000000"/>
<rect x="46" y="257.9" width="1" height="2" fill="#000000"/>
<rect x="49" y="242.5" width="2" height="34.5" fill="#000000"/>
<rect x="48" y="260.6" width="1" height="2" fill="#000000"/>
<rect x="51" y="256.3" width="1" height="2" fill="#000000"/>
<rect x="54" y="225.0" width="2" height="22.5" fill="#1010d8"/>
<rect x="53" y="242.8" width="1" height="2" fill="#1010d8"/>
<rect x="56" y="228.1" width="1" height="2" fill="#1010d8"/>
<rect x="59" y="231.0" width="2" height="25.0" fill="#1010d8"/>
<rect x="58" y="248.8" width="1" height="2" fill="#1010d8"/>
<rect x="61" y="238.8" width="1" height="2" fill="#1010d8"/>
<rect x="64" y="241.0" width="2" height="11.5" fill="#1010d8"/>
<rect x="63" y="242.9" width="1" height="2" fill="#1010d8"/>
<rect x="66" y="242.7" width="1" height="2" fill="#1010d8"/>
<rect x="69" y="230.0" width="2" height="20.0" fill="#1010d8"/>
<rect x="68" y="236.3" width="1" height="2" fill="#1010d8"/>
<rect x="71" y="243.4" width="1" height="2" fill="#1010d8"/>
<rect x="74" y="218.0" width="2" height="19.5" fill="#1010d8"/>
<rect x="73" y="222.4" width="1" height="2" fill="#1010d8"/>
<rect x="76" y="227.9" width="1" height="2" fill="#1010d8"/>
<rect x="79" y="228.0" width="2" height="13.0" fill="#1010d8"/>
<rect x="78" y="234.8" width="1" height="2" fill="#1010d8"/>
<rect x="81" y="232.3" width="1" height="2" fill="#1010d8"/>
<rect x="84" y="212.5" width="2" height="30.5" fill="#1010d8"/>
<rect x="83" y="227.8" width="1" height="2" fill="#1010d8"/>
<rect x="86" y="217.4" width="1" height="2" fill="#1010d8"/>
<rect x="89" y="214.0" width="2" height="16.0" fill="#1010d8"/>
<rect x="88" y="216.1" width="1" height="2" fill="#1010d8"/>
<rect x="91" y="217.7" width="1" height="2" fill="#1010d8"/>
<rect x="94" y="224.0" width="2" height="31.0" fill="#000000"/>
<rect x="93" y="242.4" width="1" height="2" fill="#000000"/>
<rect x="96" y="236.9" width="1" height="2" fill="#000000"/>
<rect x="99" y="250.0" width="2" height="22.0" fill="#e00000"/>
<rect x="98" y="257.1" width="1" height="2" fill="#e00000"/>
<rect x="101" y="261.3" width="1" height="2" fill="#e00000"/>
<rect x="104" y="255.0" width="2" height="17.0" fill="#e00000"/>
<rect x="103" y="261.9" width="1" height="2" fill="#e00000"/>
<rect x="106" y="260.1" width="1" height="2" fill="#e00000"/>
<rect x="109" y="227.5" width="2" height="39.5" fill="#000000"/>
<rect x="108" y="254.4" width="1" height="2" fill="#000000"/>
<rect x="111" y="251.8" width="1" height="2" fill="#000000"/>
<rect x="114" y="218.0" width="2" height="19.0" fill="#1010d8"/>
<rect x="113" y="223.1" width="1" height="2" fill="#1010d8"/>
<rect x="116" y="227.5" width="1" height="2" fill="#1010d8"/>
<rect x="119" y="209.0" width="2" height="30.0" fill="#1010d8"/>
<rect x="118" y="223.5" width="1" height="2" fill="#1010d8"/>
<rect x="121" y="230.9" width="1" height="2" fill="#1010d8"/>
<rect x="124" y="204.0" width="2" height="23.0" fill="#1010d8"/>
<rect x="123" y="218.2" width="1" height="2" fill="#1010d8"/>
<rect x="126" y="211.1" width="1" height="2" fill="#1010d8"/>
<rect x="129" y="220.0" width="2" height="18.0" fill="#1010d8"/>
<rect x="128" y="234.1" width="1" height="2" fill="#1010d8"/>
<rect x="131" y="223.2" width="1" height="2" fill="#1010d8"/>
<rect x="134" y="202.5" width="2" height="40.5" fill="#1010d8"/>
<rect x="133" y="219.4" width="1" height="2" fill="#1010d8"/>
<rect x="136" y="229.0" width="1" height="2" fill="#1010d8"/>
<rect x="139" y="215.0" width="2" height="29.0" fill="#1010d8"/>
<rect x="138" y="221.4" width="1" height="2" fill="#1010d8"/>
<rect x="141" y="228.3" width="1" height="2" fill="#1010d8"/>
<rect x="144" y="247.0" width="2" height="20.0" fill="#e00000"/>
<rect x="143" y="249.5" width="1" height="2" fill="#e00000"/>
<rect x="146" y="258.4" width="1" height="2" fill="#e00000"/>
<rect x="149" y="244.0" width="2" height="23.0" fill="#e00000"/>
<rect x="148" y="258.8" width="1" height="2" fill="#e00000"/>
<rect x="151" y="255.7" width="1" height="2" fill="#e00000"/>
<rect x="154" y="235.0" width="2" height="12.5" fill="#1010d8"/>
<rect x="153" y="243.5" width="1" height="2" fill="#1010d8"/>
<rect x="156" y="238.6" width="1" height="2" fill="#1010d8"/>
<rect x="159" y="230.0" width="2" height="24.0" fill="#1010d8"/>
<rect x="158" y="244.3" width="1" height="2" fill="#1010d8"/>
<rect x="161" y="242.6" width="1" height="2" fill="#1010d8"/>
<rect x="164" y="206.0" width="2" height="32.0" fill="#1010d8"/>
<rect x="163" y="222.8" width="1" height="2" fill="#1010d8"/>
<rect x="166" y="220.0" width="1" height="2" fill="#1010d8"/>
<rect x="169" y="199.0" width="2" height="18.5" fill="#1010d8"/>
<rect x="168" y="211.7" width="1" height="2" fill="#1010d8"/>
<rect x="171" y="213.0" width="1" height="2" fill="#1010d8"/>
<rect x="174" y="197.0" width="2" height="16.0" fill="#1010d8"/>
<rect x="173" y="203.7" width="1" height="2" fill="#1010d8"/>
<rect x="176" y="205.8" width="1" height="2" fill="#1010d8"/>
<rect x="179" y="197.5" width="2" height="40.5" fill="#1010d8"/>
<rect x="178" y="204.3" width="1" height="2" fill="#1010d8"/>
<rect x="181" y="222.5" width="1" height="2" fill="#1010d8"/>
<rect x="184" y="227.5" width="2" height="21.5" fill="#1010d8"/>
<rect x="183" y="239.5" width="1" height="2" fill="#1010d8"/>
<rect x="186" y="244.7" width="1" height="2" fill="#1010d8"/>
<rect x="189" y="227.0" width="2" height="16.0" fill="#1010d8"/>
<rect x="188" y="237.6" width="1" height="2" fill="#1010d8"/>
<rect x="191" y="231.6" width="1" height="2" fill="#1010d8"/>
<rect x="194" y="239.0" width="2" height="13.5" fill="#000000"/>
<rect x="193" y="243.7" width="1" height="2" fill="#000000"/>
<rect x="196" y="246.3" width="1" height="2" fill="#000000"/>
<rect x="199" y="233.0" width="2" height="16.0" fill="#000000"/>
<rect x="198" y="234.7" width="1" height="2" fill="#000000"/>
<rect x="201" y="239.6" width="1" height="2" fill="#000000"/>
<rect x="204" y="242.0" width="2" height="12.0" fill="#e00000"/>
<rect x="203" y="244.2" width="1" height="2" fill="#e00000"/>
<rect x="206" y="243.8" width="1" height="2" fill="#e00000"/>
<rect x="209" y="243.0" width="2" height="23.0" fill="#e00000"/>
<rect x="208" y="246.4" width="1" height="2" fill="#e00000"/>
<rect x="211" y="257.8" width="1" height="2" fill="#e00000"/>
<rect x="214" y="253.0" width="2" height="24.5" fill="#e00000"/>
<rect x="213" y="257.9" width="1" height="2" fill="#e00000"/>
<rect x="216" y="259.9" width="1" height="2" fill="#e00000"/>
<rect x="219" y="277.0" width="2" height="18.0" fill="#e00000"/>
<rect x="218" y="283.6" width="1" height="2" fill="#e00000"/>
<rect x="221" y="289.7" width="1" height="2" fill="#e00000"/>
<rect x="224" y="285.0" width="2" height="19.0" fill="#e00000"/>
<rect x="223" y="287.9" width="1" height="2" fill="#e00000"/>
<rect x="226" y="292.8" width="1" height="2" fill="#e00000"/>
<rect x="229" y="286.0" width="2" height="16.0" fill="#e00000"/>
<rect x="228" y="293.6" width="1" height="2" fill="#e00000"/>
<rect x="231" y="297.3" width="1" height="2" fill="#e00000"/>
<rect x="234" y="290.0" width="2" height="8.0" fill="#e00000"/>
<rect x="233" y="294.8" width="1" height="2" fill="#e00000"/>
<rect x="236" y="295.0" width="1" height="2" fill="#e00000"/>
<rect x="239" y="276.0" width="2" height="26.5" fill="#000000"/>
<rect x="238" y="284.1" width="1" height="2" fill="#000000"/>
<rect x="241" y="286.7" width="1" height="2" fill="#000000"/>
<rect x="244" y="263.0" width="2" height="16.0" fill="#1010d8"/>
<rect x="243" y="268.4" width="1" height="2" fill="#1010d8"/>
<rect x="246" y="274.3" width="1" height="2" fill="#1010d8"/>
<rect x="249" y="276.0" width="2" height="15.0" fill="#e00000"/>
<rect x="248" y="287.3" width="1" height="2" fill="#e00000"/>
<rect x="251" y="278.8" width="1" height="2" fill="#e00000"/>
<rect x="254" y="281.0" width="2" height="11.0" fill="#e00000"/>
<rect x="253" y="283.0" width="1" height="2" fill="#e00000"/>
<rect x="256" y="283.4" width="1" height="2" fill="#e00000"/>
<rect x="259" y="284.0" width="2" height="16.0" fill="#e00000"/>
<rect x="258" y="288.0" width="1" height="2" fill="#e00000"/>
<rect x="261" y="290.8" width="1" height="2" fill="#e00000"/>
<rect x="264" y="278.0" width="2" height="12.0" fill="#000000"/>
<rect x="263" y="283.7" width="1" height="2" fill="#000000"/>
<rect x="266" y="281.0" width="1" height="2" fill="#000000"/>
<rect x="269" y="278.0" width="2" height="15.0" fill="#000000"/>
<rect x="268" y="279.3" width="1" height="2" fill="#000000"/>
<rect x="271" y="283.6" width="1" height="2" fill="#000000"/>
<rect x="274" y="281.0" width="2" height="13.0" fill="#000000"/>
<rect x="273" y="285.3" width="1" height="2" fill="#000000"/>
<rect x="276" y="287.1" width="1" height="2" fill="#000000"/>
<rect x="279" y="294.0" width="2" height="23.0" fill="#e00000"/>
<rect x="278" y="311.8" width="1" height="2" fill="#e00000"/>
<rect x="281" y="307.6" width="1" height="2" fill="#e00000"/>
<rect x="284" y="308.0" width="2" height="7.0" fill="#e00000"/>
<rect x="283" y="310.6" width="1" height="2" fill="#e00000"/>
<rect x="286" y="311.1" width="1" height="2" fill="#e00000"/>
<rect x="289" y="315.0" width="2" height="13.0" fill="#e00000"/>
<rect x="288" y="322.1" width="1" height="2" fill="#e00000"/>
<rect x="291" y="316.4" width="1" height="2" fill="#e00000"/>
<rect x="294" y="297.5" width="2" height="16.5" fill="#e00000"/>
<rect x="293" y="309.4" width="1" height="2" fill="#e00000"/>
<rect x="296" y="308.0" width="1" height="2" fill="#e00000"/>
<rect x="299" y="303.0" width="2" height="10.0" fill="#e00000"/>
<rect x="298" y="309.6" width="1" height="2" fill="#e00000"/>
<rect x="301" y="309.1" width="1" height="2" fill="#e00000"/>
<rect x="304" y="302.5" width="2" height="10.0" fill="#e00000"/>
<rect x="303" y="305.7" width="1" height="2" fill="#e00000"/>
<rect x="306" y="305.8" width="1" height="2" fill="#e00000"/>
<rect x="309" y="311.0" width="2" height="11.5" fill="#e00000"/>
<rect x="308" y="312.6" width="1" height="2" fill="#e00000"/>
<rect x="311" y="316.8" width="1" height="2" fill="#e00000"/>
<rect x="314" y="297.0" width="2" height="20.0" fill="#000000"/>
<rect x="313" y="299.9" width="1" height="2" fill="#000000"/>
<rect x="316" y="299.9" width="1" height="2" fill="#000000"/>
<rect x="319" y="295.0" width="2" height="18.0" fill="#e00000"/>
<rect x="318" y="299.3" width="1" height="2" fill="#e00000"/>
<rect x="321" y="298.7" width="1" height="2" fill="#e00000"/>
<rect x="324" y="293.0" width="2" height="20.0" fill="#000000"/>
<rect x="323" y="299.8" width="1" height="2" fill="#000000"/>
<rect x="326" y="295.7" width="1" height="2" fill="#000000"/>
<rect x="329" y="287.0" width="2" height="15.0" fill="#000000"/>
<rect x="328" y="288.3" width="1" height="2" fill="#000000"/>
<rect x="331" y="289.8" width="1" height="2" fill="#000000"/>
<rect x="334" y="287.5" width="2" height="20.0" fill="#000000"/>
<rect x="333" y="290.9" width="1" height="2" fill="#000000"/>
<rect x="336" y="294.6" width="1" height="2" fill="#000000"/>
<rect x="339" y="282.5" width="2" height="21.5" fill="#1010d8"/>
<rect x="338" y="285.1" width="1" height="2" fill="#1010d8"/>
<rect x="341" y="297.9" width="1" height="2" fill="#1010d8"/>
<rect x="344" y="264.0" width="2" height="25.0" fill="#1010d8"/>
<rect x="343" y="277.5" width="1" height="2" fill="#1010d8"/>
<rect x="346" y="269.3" width="1" height="2" fill="#1010d8"/>
<rect x="349" y="259.0" width="2" height="16.0" fill="#1010d8"/>
<rect x="348" y="263.2" width="1" height="2" fill="#1010d8"/>
<rect x="351" y="264.3" width="1" height="2" fill="#1010d8"/>
<rect x="354" y="252.5" width="2" height="26.5" fill="#1010d8"/>
<rect x="353" y="262.2" width="1" height="2" fill="#1010d8"/>
<rect x="356" y="257.8" width="1" height="2" fill="#1010d8"/>
<rect x="359" y="259.0" width="2" height="26.0" fill="#1010d8"/>
<rect x="358" y="277.4" width="1" height="2" fill="#1010d8"/>
<rect x="361" y="280.0" width="1" height="2" fill="#1010d8"/>
<rect x="364" y="253.0" width="2" height="29.0" fill="#1010d8"/>
<rect x="363" y="265.8" width="1" height="2" fill="#1010d8"/>
<rect x="366" y="266.2" width="1" height="2" fill="#1010d8"/>
<rect x="369" y="263.0" width="2" height="18.0" fill="#1010d8"/>
<rect x="368" y="265.8" width="1" height="2" fill="#1010d8"/>
<rect x="371" y="266.0" width="1" height="2" fill="#1010d8"/>
<rect x="374" y="268.0" width="2" height="34.5" fill="#000000"/>
<rect x="373" y="280.4" width="1" height="2" fill="#000000"/>
<rect x="376" y="278.6" width="1" height="2" fill="#000000"/>
<rect x="379" y="267.5" width="2" height="32.5" fill="#1010d8"/>
<rect x="378" y="290.2" width="1" height="2" fill="#1010d8"/>
<rect x="381" y="275.0" width="1" height="2" fill="#1010d8"/>
<rect x="384" y="255.0" width="2" height="19.0" fill="#1010d8"/>
<rect x="383" y="257.2" width="1" height="2" fill="#1010d8"/>
<rect x="386" y="269.5" width="1" height="2" fill="#1010d8"/>
<rect x="389" y="245.0" width="2" height="15.0" fill="#1010d8"/>
<rect x="388" y="251.8" width="1" height="2" fill="#1010d8"/>
<rect x="391" y="247.8" width="1" height="2" fill="#1010d8"/>
<rect x="394" y="257.5" width="2" height="11.5" fill="#1010d8"/>
<rect x="393" y="262.6" width="1" height="2" fill="#1010d8"/>
<rect x="396" y="258.4" width="1" height="2" fill="#1010d8"/>
<rect x="399" y="265.0" width="2" height="19.0" fill="#1010d8"/>
<rect x="398" y="273.9" width="1" height="2" fill="#1010d8"/>
<rect x="401" y="279.9" width="1" height="2" fill="#1010d8"/>
<rect x="404" y="278.0" width="2" height="21.0" fill="#e00000"/>
<rect x="403" y="292.8" width="1" height="2" fill="#e00000"/>
<rect x="406" y="290.4" width="1" height="2" fill="#e00000"/>
<rect x="409" y="303.0" width="2" height="29.5" fill="#e00000"/>
<rect x="408" y="311.8" width="1" height="2" fill="#e00000"/>
<rect x="411" y="314.0" width="1" height="2" fill="#e00000"/>
<rect x="414" y="312.0" width="2" height="20.0" fill="#e00000"/>
<rect x="413" y="316.3" width="1" height="2" fill="#e00000"/>
<rect x="416" y="324.8" width="1" height="2" fill="#e00000"/>
<rect x="419" y="322.5" width="2" height="9.5" fill="#e00000"/>
<rect x="418" y="326.5" width="1" height="2" fill="#e00000"/>
<rect x="421" y="328.1" width="1" height="2" fill="#e00000"/>
<rect x="424" y="321.0" width="2" height="11.5" fill="#e00000"/>
<rect x="423" y="324.4" width="1" height="2" fill="#e00000"/>
<rect x="426" y="323.5" width="1" height="2" fill="#e00000"/>
<rect x="429" y="314.0" width="2" height="28.5" fill="#e00000"/>
<rect x="428" y="333.5" width="1" height="2" fill="#e00000"/>
<rect x="431" y="336.9" width="1" height="2" fill="#e00000"/>
<rect x="434" y="329.0" width="2" height="15.0" fill="#e00000"/>
<rect x="433" y="339.2" width="1" height="2" fill="#e00000"/>
<rect x="436" y="338.7" width="1" height="2" fill="#e00000"/>
<rect x="439" y="332.5" width="2" height="11.5" fill="#e00000"/>
<rect x="438" y="339.8" width="1" height="2" fill="#e00000"/>
<rect x="441" y="339.2" width="1" height="2" fill="#e00000"/>
<rect x="444" y="317.5" width="2" height="23.5" fill="#e00000"/>
<rect x="443" y="323.8" width="1" height="2" fill="#e00000"/>
<rect x="446" y="328.5" width="1" height="2" fill="#e00000"/>
<rect x="449" y="316.0" width="2" height="23.0" fill="#e00000"/>
<rect x="448" y="324.2" width="1" height="2" fill="#e00000"/>
<rect x="451" y="318.9" width="1" height="2" fill="#e00000"/>
<rect x="454" y="334.0" width="2" height="12.7" fill="#e00000"/>
<rect x="453" y="335.2" width="1" height="2" fill="#e00000"/>
<rect x="456" y="337.4" width="1" height="2" fill="#e00000"/>
<rect x="459" y="342.5" width="2" height="21.5" fill="#e00000"/>
<rect x="458" y="348.6" width="1" height="2" fill="#e00000"/>
<rect x="461" y="355.1" width="1" height="2" fill="#e00000"/>
<rect x="464" y="351.7" width="2" height="15.8" fill="#e00000"/>
<rect x="463" y="363.6" width="1" height="2" fill="#e00000"/>
<rect x="466" y="358.0" width="1" height="2" fill="#e00000"/>
<rect x="469" y="350.0" width="2" height="20.0" fill="#e00000"/>
<rect x="468" y="365.1" width="1" height="2" fill="#e00000"/>
<rect x="471" y="365.8" width="1" height="2" fill="#e00000"/>
<rect x="474" y="364.0" width="2" height="12.7" fill="#e00000"/>
<rect x="473" y="373.4" width="1" height="2" fill="#e00000"/>
<rect x="476" y="368.1" width="1" height="2" fill="#e00000"/>
<rect x="479" y="356.7" width="2" height="20.0" fill="#e00000"/>
<rect x="478" y="361.8" width="1" height="2" fill="#e00000"/>
<rect x="481" y="361.9" width="1" height="2" fill="#e00000"/>
<rect x="484" y="376.7" width="2" height="16.3" fill="#e00000"/>
<rect x="483" y="380.4" width="1" height="2" fill="#e00000"/>
<rect x="486" y="380.5" width="1" height="2" fill="#e00000"/>
<rect x="489" y="371.7" width="2" height="15.0" fill="#e00000"/>
<rect x="488" y="379.5" width="1" height="2" fill="#e00000"/>
<rect x="491" y="382.4" width="1" height="2" fill="#e00000"/>
<rect x="494" y="371.0" width="2" height="17.0" fill="#e00000"/>
<rect x="493" y="382.6" width="1" height="2" fill="#e00000"/>
<rect x="496" y="378.3" width="1" height="2" fill="#e00000"/>
<rect x="499" y="376.7" width="2" height="10.0" fill="#e00000"/>
<rect x="498" y="381.8" width="1" height="2" fill="#e00000"/>
<rect x="501" y="382.8" width="1" height="2" fill="#e00000"/>
<rect x="504" y="371.0" width="2" height="14.0" fill="#e00000"/>
<rect x="503" y="372.9" width="1" height="2" fill="#e00000"/>
<rect x="506" y="378.6" width="1" height="2" fill="#e00000"/>
<rect x="509" y="372.5" width="2" height="10.0" fill="#e00000"/>
<rect x="508" y="379.4" width="1" height="2" fill="#e00000"/>
<rect x="511" y="378.5" width="1" height="2" fill="#e00000"/>
<rect x="514" y="359.0" width="2" height="25.0" fill="#e00000"/>
<rect x="513" y="374.9" width="1" height="2" fill="#e00000"/>
<rect x="516" y="370.1" width="1" height="2" fill="#e00000"/>
<rect x="519" y="367.5" width="2" height="13.5" fill="#e00000"/>
<rect x="518" y="370.2" width="1" height="2" fill="#e00000"/>
<rect x="521" y="376.0" width="1" height="2" fill="#e00000"/>
<rect x="524" y="376.0" width="2" height="12.0" fill="#e00000"/>
<rect x="523" y="379.6" width="1" height="2" fill="#e00000"/>
<rect x="526" y="383.5" width="1" height="2" fill="#e00000"/>
<rect x="529" y="376.7" width="2" height="13.3" fill="#e00000"/>
<rect x="528" y="386.7" width="1" height="2" fill="#e00000"/>
<rect x="531" y="381.4" width="1" height="2" fill="#e00000"/>
<rect x="534" y="388.0" width="2" height="19.5" fill="#e00000"/>
<rect x="533" y="395.4" width="1" height="2" fill="#e00000"/>
<rect x="536" y="402.8" width="1" height="2" fill="#e00000"/>
<rect x="539" y="370.0" width="2" height="16.7" fill="#e00000"/>
<rect x="538" y="380.0" width="1" height="2" fill="#e00000"/>
<rect x="541" y="373.5" width="1" height="2" fill="#e00000"/>
<rect x="544" y="375.0" width="2" height="12.5" fill="#e00000"/>
<rect x="543" y="377.0" width="1" height="2" fill="#e00000"/>
<rect x="546" y="377.2" width="1" height="2" fill="#e00000"/>
<rect x="549" y="347.5" width="2" height="34.2" fill="#1010d8"/>
<rect x="548" y="373.3" width="1" height="2" fill="#1010d8"/>
<rect x="551" y="370.9" width="1" height="2" fill="#1010d8"/>
<rect x="554" y="344.0" width="2" height="22.0" fill="#1010d8"/>
<rect x="553" y="348.6" width="1" height="2" fill="#1010d8"/>
<rect x="556" y="359.0" width="1" height="2" fill="#1010d8"/>
<rect x="559" y="356.0" width="2" height="25.7" fill="#000000"/>
<rect x="558" y="376.5" width="1" height="2" fill="#000000"/>
<rect x="561" y="370.7" width="1" height="2" fill="#000000"/>
<rect x="564" y="367.5" width="2" height="12.5" fill="#000000"/>
<rect x="563" y="371.4" width="1" height="2" fill="#000000"/>
<rect x="566" y="373.2" width="1" height="2" fill="#000000"/>
<rect x="569" y="349.0" width="2" height="27.7" fill="#e00000"/>
<rect x="568" y="354.7" width="1" height="2" fill="#e00000"/>
<rect x="571" y="352.4" width="1" height="2" fill="#e00000"/>
<rect x="574" y="331.0" width="2" height="40.7" fill="#1010d8"/>
<rect x="573" y="363.8" width="1" height="2" fill="#1010d8"/>
<rect x="576" y="354.6" width="1" height="2" fill="#1010d8"/>
<rect x="579" y="316.0" width="2" height="30.0" fill="#1010d8"/>
<rect x="578" y="330.6" width="1" height="2" fill="#1010d8"/>
<rect x="581" y="339.1" width="1" height="2" fill="#1010d8"/>
<rect x="584" y="328.0" width="2" height="23.7" fill="#1010d8"/>
<rect x="583" y="337.8" width="1" height="2" fill="#1010d8"/>
<rect x="586" y="345.0" width="1" height="2" fill="#1010d8"/>
<rect x="589" y="325.0" width="2" height="26.0" fill="#1010d8"/>
<rect x="588" y="342.9" width="1" height="2" fill="#1010d8"/>
<rect x="591" y="331.7" width="1" height="2" fill="#1010d8"/>
<rect x="594" y="329.0" width="2" height="18.5" fill="#1010d8"/>
<rect x="593" y="334.0" width="1" height="2" fill="#1010d8"/>
<rect x="596" y="334.6" width="1" height="2" fill="#1010d8"/>
<rect x="599" y="310.0" width="2" height="29.0" fill="#1010d8"/>
<rect x="598" y="318.2" width="1" height="2" fill="#1010d8"/>
<rect x="601" y="325.3" width="1" height="2" fill="#1010d8"/>
<rect x="604" y="310.0" width="2" height="20.0" fill="#1010d8"/>
<rect x="603" y="315.6" width="1" height="2" fill="#1010d8"/>
<rect x="606" y="317.9" width="1" height="2" fill="#1010d8"/>
<rect x="609" y="317.5" width="2" height="23.5" fill="#1010d8"/>
<rect x="608" y="322.2" width="1" height="2" fill="#1010d8"/>
<rect x="611" y="335.0" width="1" height="2" fill="#1010d8"/>
<rect x="614" y="319.0" width="2" height="25.0" fill="#1010d8"/>
<rect x="613" y="327.9" width="1" height="2" fill="#1010d8"/>
<rect x="616" y="329.8" width="1" height="2" fill="#1010d8"/>
<rect x="619" y="262.5" width="2" height="20.5" fill="#1010d8"/>
<rect x="618" y="272.9" width="1" height="2" fill="#1010d8"/>
<rect x="621" y="277.6" width="1" height="2" fill="#1010d8"/>
<rect x="624" y="273.0" width="2" height="41.0" fill="#1010d8"/>
<rect x="623" y="290.2" width="1" height="2" fill="#1010d8"/>
<rect x="626" y="304.5" width="1" height="2" fill="#1010d8"/>
<rect x="629" y="303.0" width="2" height="13.0" fill="#1010d8"/>
<rect x="628" y="308.5" width="1" height="2" fill="#1010d8"/>
<rect x="631" y="308.8" width="1" height="2" fill="#1010d8"/>
<rect x="634" y="309.0" width="2" height="16.0" fill="#1010d8"/>
<rect x="633" y="316.3" width="1" height="2" fill="#1010d8"/>
<rect x="636" y="310.6" width="1" height="2" fill="#1010d8"/>
<rect x="639" y="301.7" width="2" height="20.8" fill="#1010d8"/>
<rect x="638" y="310.2" width="1" height="2" fill="#1010d8"/>
<rect x="641" y="306.5" width="1" height="2" fill="#1010d8"/>
<rect x="644" y="301.0" width="2" height="23.0" fill="#1010d8"/>
<rect x="643" y="303.5" width="1" height="2" fill="#1010d8"/>
<rect x="646" y="316.3" width="1" height="2" fill="#1010d8"/>
<rect x="649" y="266.7" width="2" height="29.3" fill="#1010d8"/>
<rect x="648" y="273.6" width="1" height="2" fill="#1010d8"/>
<rect x="651" y="279.8" width="1" height="2" fill="#1010d8"/>
<rect x="654" y="264.0" width="2" height="13.5" fill="#1010d8"/>
<rect x="653" y="271.9" width="1" height="2" fill="#1010d8"/>
<rect x="656" y="270.3" width="1" height="2" fill="#1010d8"/>
<rect x="659" y="247.5" width="2" height="39.2" fill="#1010d8"/>
<rect x="658" y="261.3" width="1" height="2" fill="#1010d8"/>
<rect x="661" y="266.6" width="1" height="2" fill="#1010d8"/>
<rect x="664" y="232.5" width="2" height="25.5" fill="#1010d8"/>
<rect x="663" y="245.2" width="1" height="2" fill="#1010d8"/>
<rect x="666" y="249.3" width="1" height="2" fill="#1010d8"/>
<rect x="669" y="216.0" width="2" height="25.0" fill="#1010d8"/>
<rect x="668" y="220.6" width="1" height="2" fill="#1010d8"/>
<rect x="671" y="228.6" width="1" height="2" fill="#1010d8"/>
<rect x="674" y="199.0" width="2" height="17.0" fill="#1010d8"/>
<rect x="673" y="203.5" width="1" height="2" fill="#1010d8"/>
<rect x="676" y="203.8" width="1" height="2" fill="#1010d8"/>
<rect x="679" y="192.5" width="2" height="16.5" fill="#1010d8"/>
<rect x="678" y="202.9" width="1" height="2" fill="#1010d8"/>
<rect x="681" y="199.8" width="1" height="2" fill="#1010d8"/>
<rect x="684" y="193.0" width="2" height="14.5" fill="#1010d8"/>
<rect x="683" y="199.9" width="1" height="2" fill="#1010d8"/>
<rect x="686" y="201.9" width="1" height="2" fill="#1010d8"/>
<rect x="689" y="171.0" width="2" height="30.7" fill="#1010d8"/>
<rect x="688" y="194.2" width="1" height="2" fill="#1010d8"/>
<rect x="691" y="184.1" width="1" height="2" fill="#1010d8"/>
<rect x="694" y="169.0" width="2" height="25.0" fill="#1010d8"/>
<rect x="693" y="182.5" width="1" height="2" fill="#1010d8"/>
<rect x="696" y="180.6" width="1" height="2" fill="#1010d8"/>
<rect x="699" y="146.0" width="2" height="32.0" fill="#1010d8"/>
<rect x="698" y="161.3" width="1" height="2" fill="#1010d8"/>
<rect x="701" y="165.3" width="1" height="2" fill="#1010d8"/>
<rect x="704" y="151.0" width="2" height="25.0" fill="#1010d8"/>
<rect x="703" y="161.7" width="1" height="2" fill="#1010d8"/>
<rect x="706" y="163.1" width="1" height="2" fill="#1010d8"/>
<rect x="709" y="156.7" width="2" height="30.8" fill="#e00000"/>
<rect x="708" y="170.6" width="1" height="2" fill="#e00000"/>
<rect x="711" y="180.6" width="1" height="2" fill="#e00000"/>
<rect x="714" y="162.5" width="2" height="29.2" fill="#000000"/>
<rect x="713" y="180.2" width="1" height="2" fill="#000000"/>
<rect x="716" y="183.8" width="1" height="2" fill="#000000"/>
<rect x="719" y="149.0" width="2" height="30.0" fill="#000000"/>
<rect x="718" y="172.3" width="1" height="2" fill="#000000"/>
<rect x="721" y="158.0" width="1" height="2" fill="#000000"/>
<rect x="724" y="154.0" width="2" height="27.7" fill="#1010d8"/>
<rect x="723" y="168.0" width="1" height="2" fill="#1010d8"/>
<rect x="726" y="175.4" width="1" height="2" fill="#1010d8"/>
<rect x="729" y="148.0" width="2" height="18.0" fill="#1010d8"/>
<rect x="728" y="160.3" width="1" height="2" fill="#1010d8"/>
<rect x="731" y="151.4" width="1" height="2" fill="#1010d8"/>
<rect x="734" y="154.0" width="2" height="22.7" fill="#000000"/>
<rect x="733" y="158.3" width="1" height="2" fill="#000000"/>
<rect x="736" y="163.4" width="1" height="2" fill="#000000"/>
<rect x="739" y="156.7" width="2" height="17.3" fill="#000000"/>
<rect x="738" y="159.2" width="1" height="2" fill="#000000"/>
<rect x="741" y="161.2" width="1" height="2" fill="#000000"/>
<rect x="744" y="134.0" width="2" height="27.7" fill="#1010d8"/>
<rect x="743" y="138.6" width="1" height="2" fill="#1010d8"/>
<rect x="746" y="150.1" width="1" height="2" fill="#1010d8"/>
<rect x="749" y="128.0" width="2" height="31.0" fill="#1010d8"/>
<rect x="748" y="148.7" width="1" height="2" fill="#1010d8"/>
<rect x="751" y="151.1" width="1" height="2" fill="#1010d8"/>
<rect x="754" y="132.5" width="2" height="29.2" fill="#1010d8"/>
<rect x="753" y="139.0" width="1" height="2" fill="#1010d8"/>
<rect x="756" y="150.5" width="1" height="2" fill="#1010d8"/>
<rect x="759" y="130.0" width="2" height="20.0" fill="#1010d8"/>
<rect x="758" y="141.2" width="1" height="2" fill="#1010d8"/>
<rect x="761" y="134.0" width="1" height="2" fill="#1010d8"/>
<rect x="764" y="123.0" width="2" height="28.7" fill="#1010d8"/>
<rect x="763" y="144.0" width="1" height="2" fill="#1010d8"/>
<rect x="766" y="145.7" width="1" height="2" fill="#1010d8"/>
<rect x="769" y="130.0" width="2" height="17.5" fill="#1010d8"/>
<rect x="768" y="134.3" width="1" height="2" fill="#1010d8"/>
<rect x="771" y="143.3" width="1" height="2" fill="#1010d8"/>
<rect x="774" y="128.0" width="2" height="23.0" fill="#1010d8"/>
<rect x="773" y="136.9" width="1" height="2" fill="#1010d8"/>
<rect x="776" y="138.3" width="1" height="2" fill="#1010d8"/>
<rect x="779" y="101.7" width="2" height="38.3" fill="#1010d8"/>
<rect x="778" y="133.0" width="1" height="2" fill="#1010d8"/>
<rect x="781" y="128.8" width="1" height="2" fill="#1010d8"/>
<rect x="784" y="79.0" width="2" height="27.0" fill="#1010d8"/>
<rect x="783" y="85.1" width="1" height="2" fill="#1010d8"/>
<rect x="786" y="90.2" width="1" height="2" fill="#1010d8"/>
<rect x="789" y="82.5" width="2" height="55.0" fill="#1010d8"/>
<rect x="788" y="109.6" width="1" height="2" fill="#1010d8"/>
<rect x="791" y="102.8" width="1" height="2" fill="#1010d8"/>
<rect x="794" y="108.0" width="2" height="37.0" fill="#1010d8"/>
<rect x="793" y="117.6" width="1" height="2" fill="#1010d8"/>
<rect x="796" y="120.8" width="1" height="2" fill="#1010d8"/>
<rect x="799" y="116.0" width="2" height="35.7" fill="#1010d8"/>
<rect x="798" y="138.4" width="1" height="2" fill="#1010d8"/>
<rect x="801" y="120.8" width="1" height="2" fill="#1010d8"/>
<rect x="804" y="149.0" width="2" height="27.7" fill="#e00000"/>
<rect x="803" y="162.9" width="1" height="2" fill="#e00000"/>
<rect x="806" y="160.7" width="1" height="2" fill="#e00000"/>
<rect x="809" y="119.0" width="2" height="55.0" fill="#000000"/>
<rect x="808" y="126.9" width="1" height="2" fill="#000000"/>
<rect x="811" y="139.0" width="1" height="2" fill="#000000"/>
<rect x="814" y="108.0" width="2" height="25.0" fill="#000000"/>
<rect x="813" y="121.7" width="1" height="2" fill="#000000"/>
<rect x="816" y="119.7" width="1" height="2" fill="#000000"/>
<rect x="819" y="111.0" width="2" height="25.7" fill="#1010d8"/>
<rect x="818" y="115.0" width="1" height="2" fill="#1010d8"/>
<rect x="821" y="131.6" width="1" height="2" fill="#1010d8"/>
<rect x="824" y="95.0" width="2" height="26.0" fill="#1010d8"/>
<rect x="823" y="112.2" width="1" height="2" fill="#1010d8"/>
<rect x="826" y="115.6" width="1" height="2" fill="#1010d8"/>
<rect x="829" y="98.0" width="2" height="24.5" fill="#1010d8"/>
<rect x="828" y="102.5" width="1" height="2" fill="#1010d8"/>
<rect x="831" y="105.2" width="1" height="2" fill="#1010d8"/>
<rect x="834" y="100.0" width="2" height="37.5" fill="#1010d8"/>
<rect x="833" y="105.7" width="1" height="2" fill="#1010d8"/>
<rect x="836" y="125.1" width="1" height="2" fill="#1010d8"/>
<rect x="839" y="134.0" width="2" height="22.7" fill="#1010d8"/>
<rect x="838" y="140.7" width="1" height="2" fill="#1010d8"/>
<rect x="841" y="138.5" width="1" height="2" fill="#1010d8"/>
<rect x="844" y="111.0" width="2" height="33.0" fill="#1010d8"/>
<rect x="843" y="124.7" width="1" height="2" fill="#1010d8"/>
<rect x="846" y="136.0" width="1" height="2" fill="#1010d8"/>
<rect x="849" y="84.0" width="2" height="33.5" fill="#1010d8"/>
<rect x="848" y="107.2" width="1" height="2" fill="#1010d8"/>
<rect x="851" y="94.1" width="1" height="2" fill="#1010d8"/>
<rect x="854" y="86.0" width="2" height="15.7" fill="#1010d8"/>
<rect x="853" y="89.0" width="1" height="2" fill="#1010d8"/>
<rect x="856" y="97.5" width="1" height="2" fill="#1010d8"/>
<rect x="859" y="64.0" width="2" height="49.0" fill="#1010d8"/>
<rect x="858" y="89.9" width="1" height="2" fill="#1010d8"/>
<rect x="861" y="94.4" width="1" height="2" fill="#1010d8"/>
<rect x="864" y="103.0" width="2" height="29.5" fill="#1010d8"/>
<rect x="863" y="108.3" width="1" height="2" fill="#1010d8"/>
<rect x="866" y="107.6" width="1" height="2" fill="#1010d8"/>
<rect x="869" y="102.5" width="2" height="14.2" fill="#1010d8"/>
<rect x="868" y="110.5" width="1" height="2" fill="#1010d8"/>
<rect x="871" y="107.9" width="1" height="2" fill="#1010d8"/>
<rect x="874" y="111.0" width="2" height="17.0" fill="#1010d8"/>
<rect x="873" y="113.4" width="1" height="2" fill="#1010d8"/>
<rect x="876" y="123.7" width="1" height="2" fill="#1010d8"/>
<rect x="879" y="81.0" width="2" height="45.7" fill="#1010d8"/>
<rect x="878" y="107.2" width="1" height="2" fill="#1010d8"/>
<rect x="881" y="112.5" width="1" height="2" fill="#1010d8"/>
<rect x="884" y="74.0" width="2" height="34.0" fill="#1010d8"/>
<rect x="883" y="80.1" width="1" height="2" fill="#1010d8"/>
<rect x="886" y="98.5" width="1" height="2" fill="#1010d8"/>
<rect x="889" y="72.5" width="2" height="26.5" fill="#1010d8"/>
<rect x="888" y="76.7" width="1" height="2" fill="#1010d8"/>
<rect x="891" y="91.5" width="1" height="2" fill="#1010d8"/>
<rect x="894" y="60.0" width="2" height="26.0" fill="#1010d8"/>
<rect x="893" y="71.2" width="1" height="2" fill="#1010d8"/>
<rect x="896" y="69.1" width="1" height="2" fill="#1010d8"/>
<rect x="899" y="74.0" width="2" height="21.0" fill="#1010d8"/>
<rect x="898" y="84.3" width="1" height="2" fill="#1010d8"/>
<rect x="901" y="89.8" width="1" height="2" fill="#1010d8"/>
<rect x="904" y="78.0" width="2" height="36.0" fill="#1010d8"/>
<rect x="903" y="89.2" width="1" height="2" fill="#1010d8"/>
<rect x="906" y="85.7" width="1" height="2" fill="#1010d8"/>
<rect x="909" y="98.0" width="2" height="16.0" fill="#1010d8"/>
<rect x="908" y="105.3" width="1" height="2" fill="#1010d8"/>
<rect x="911" y="102.1" width="1" height="2" fill="#1010d8"/>
<rect x="914" y="102.5" width="2" height="40.0" fill="#e00000"/>
<rect x="913" y="110.6" width="1" height="2" fill="#e00000"/>
<rect x="916" y="112.0" width="1" height="2" fill="#e00000"/>
<rect x="919" y="128.0" width="2" height="13.7" fill="#e00000"/>
<rect x="918" y="129.5" width="1" height="2" fill="#e00000"/>
<rect x="921" y="131.0" width="1" height="2" fill="#e00000"/>
<rect x="924" y="133.0" width="2" height="25.0" fill="#e00000"/>
<rect x="923" y="141.2" width="1" height="2" fill="#e00000"/>
<rect x="926" y="141.1" width="1" height="2" fill="#e00000"/>
<rect x="929" y="114.0" width="2" height="24.0" fill="#e00000"/>
<rect x="928" y="129.4" width="1" height="2" fill="#e00000"/>
<rect x="931" y="121.5" width="1" height="2" fill="#e00000"/>
<rect x="934" y="133.0" width="2" height="19.5" fill="#e00000"/>
<rect x="933" y="141.8" width="1" height="2" fill="#e00000"/>
<rect x="936" y="137.4" width="1" height="2" fill="#e00000"/>
<rect x="939" y="122.5" width="2" height="16.5" fill="#e00000"/>
<rect x="938" y="128.0" width="1" height="2" fill="#e00000"/>
<rect x="941" y="124.2" width="1" height="2" fill="#e00000"/>
<rect x="944" y="96.0" width="2" height="40.7" fill="#1010d8"/>
<rect x="943" y="108.2" width="1" height="2" fill="#1010d8"/>
<rect x="946" y="101.5" width="1" height="2" fill="#1010d8"/>
<rect x="949" y="98.0" width="2" height="30.0" fill="#1010d8"/>
<rect x="948" y="116.9" width="1" height="2" fill="#1010d8"/>
<rect x="951" y="113.1" width="1" height="2" fill="#1010d8"/>
<rect x="954" y="105.0" width="2" height="14.0" fill="#1010d8"/>
<rect x="953" y="108.0" width="1" height="2" fill="#1010d8"/>
<rect x="956" y="110.8" width="1" height="2" fill="#1010d8"/>
<rect x="959" y="100.0" width="2" height="13.0" fill="#1010d8"/>
<rect x="958" y="109.5" width="1" height="2" fill="#1010d8"/>
<rect x="961" y="101.9" width="1" height="2" fill="#1010d8"/>
<rect x="964" y="99.0" width="2" height="10.0" fill="#1010d8"/>
<rect x="963" y="105.2" width="1" height="2" fill="#1010d8"/>
<rect x="966" y="102.5" width="1" height="2" fill="#1010d8"/>
<rect x="969" y="108.0" width="2" height="19.5" fill="#000000"/>
<rect x="968" y="116.7" width="1" height="2" fill="#000000"/>
<rect x="971" y="121.3" width="1" height="2" fill="#000000"/>
<rect x="974" y="119.0" width="2" height="11.0" fill="#000000"/>
<rect x="973" y="122.7" width="1" height="2" fill="#000000"/>
<rect x="976" y="123.6" width="1" height="2" fill="#000000"/>
<rect x="979" y="99.0" width="2" height="27.7" fill="#1010d8"/>
<rect x="978" y="115.5" width="1" height="2" fill="#1010d8"/>
<rect x="981" y="121.2" width="1" height="2" fill="#1010d8"/>
<rect x="984" y="85.0" width="2" height="19.0" fill="#1010d8"/>
<rect x="983" y="91.4" width="1" height="2" fill="#1010d8"/>
<rect x="986" y="97.9" width="1" height="2" fill="#1010d8"/>
<rect x="989" y="97.5" width="2" height="25.5" fill="#1010d8"/>
<rect x="988" y="112.9" width="1" height="2" fill="#1010d8"/>
<rect x="991" y="111.7" width="1" height="2" fill="#1010d8"/>
<rect x="994" y="106.0" width="2" height="33.0" fill="#e00000"/>
<rect x="993" y="119.3" width="1" height="2" fill="#e00000"/>
<rect x="996" y="118.0" width="1" height="2" fill="#e00000"/>
<rect x="999" y="135.0" width="2" height="12.5" fill="#e00000"/>
<rect x="998" y="136.4" width="1" height="2" fill="#e00000"/>
<rect x="1001" y="137.0" width="1" height="2" fill="#e00000"/>
<rect x="1004" y="114.0" width="2" height="37.7" fill="#e00000"/>
<rect x="1003" y="120.5" width="1" height="2" fill="#e00000"/>
<rect x="1006" y="138.2" width="1" height="2" fill="#e00000"/>
<rect x="1009" y="111.7" width="2" height="33.3" fill="#e00000"/>
<rect x="1008" y="121.7" width="1" height="2" fill="#e00000"/>
<rect x="1011" y="119.5" width="1" height="2" fill="#e00000"/>
<rect x="1014" y="131.0" width="2" height="39.0" fill="#e00000"/>
<rect x="1013" y="138.2" width="1" height="2" fill="#e00000"/>
<rect x="1016" y="158.8" width="1" height="2" fill="#e00000"/>
<rect x="1019" y="156.0" width="2" height="20.0" fill="#e00000"/>
<rect x="1018" y="170.2" width="1" height="2" fill="#e00000"/>
<rect x="1021" y="167.4" width="1" height="2" fill="#e00000"/>
<rect x="1024" y="137.5" width="2" height="31.5" fill="#e00000"/>
<rect x="1023" y="147.4" width="1" height="2" fill="#e00000"/>
<rect x="1026" y="146.6" width="1" height="2" fill="#e00000"/>
<rect x="1029" y="111.7" width="2" height="36.3" fill="#000000"/>
<rect x="1028" y="123.6" width="1" height="2" fill="#000000"/>
<rect x="1031" y="127.8" width="1" height="2" fill="#000000"/>
<rect x="1034" y="104.0" width="2" height="22.7" fill="#1010d8"/>
<rect x="1033" y="108.9" width="1" height="2" fill="#1010d8"/>
<rect x="1036" y="113.5" width="1" height="2" fill="#1010d8"/>
<rect x="1039" y="103.0" width="2" height="30.0" fill="#1010d8"/>
<rect x="1038" y="112.0" width="1" height="2" fill="#1010d8"/>
<rect x="1041" y="126.7" width="1" height="2" fill="#1010d8"/>
<rect x="1044" y="128.0" width="2" height="36.0" fill="#e00000"/>
<rect x="1043" y="156.9" width="1" height="2" fill="#e00000"/>
<rect x="1046" y="146.2" width="1" height="2" fill="#e00000"/>
<rect x="1049" y="131.0" width="2" height="34.0" fill="#e00000"/>
<rect x="1048" y="140.9" width="1" height="2" fill="#e00000"/>
<rect x="1051" y="158.1" width="1" height="2" fill="#e00000"/>
<rect x="1054" y="124.0" width="2" height="29.0" fill="#e00000"/>
<rect x="1053" y="133.6" width="1" height="2" fill="#e00000"/>
<rect x="1056" y="134.6" width="1" height="2" fill="#e00000"/>
</g>
<polyline points="5.0,233.0 10.0,236.7 16.7,243.3 23.3,253.3 30.0,266.7 33.3,268.3 50.0,267.5 63.3,265.8 73.3,255.0 80.0,251.7 86.7,247.5 93.3,246.7 116.7,246.7 143.3,245.8 166.7,245.0 175.0,243.0 200.0,243.0 212.0,246.7 215.3,250.8 222.0,265.0 228.7,278.3 237.0,283.0 245.3,281.7 262.0,283.0 278.7,284.0 285.3,286.7 292.0,292.5 305.3,296.7 312.0,298.3 328.7,297.5 338.7,297.5 345.3,293.3 358.7,288.3 372.0,286.7 382.0,285.0 390.3,282.0 403.7,282.5 412.0,288.3 424.0,294.0 440.7,324.0 465.7,334.0 479.0,342.5 490.7,351.7 502.3,365.8 517.3,366.7 534.0,369.0 550.7,368.3 570.0,366.7 576.7,364.0 598.3,355.0 613.3,350.0 620.0,339.0 641.7,337.0 653.3,329.0 660.0,320.0 663.3,315.0 670.8,298.3 675.0,273.3 680.0,246.7 686.7,216.7 690.0,201.7 695.0,185.0 703.3,170.0 711.7,170.0 730.0,166.7 743.3,165.0 760.0,163.0 776.7,160.0 785.0,146.7 800.0,145.8 810.0,146.7 826.7,145.0 845.0,144.0 856.7,134.0 871.7,133.0 876.7,132.5 885.0,130.8 893.3,123.0 910.0,121.7 926.7,123.3 940.0,126.7 960.0,125.8 970.0,122.5 986.7,119.0 996.7,120.8 1010.0,123.3 1020.0,129.0 1036.7,130.0 1055.0,130.3" fill="none" stroke="#901060" stroke-width="1.1" stroke-linejoin="round"/>
<line x1="0.0" y1="86.9" x2="518.8" y2="228.3" stroke="#800080" stroke-width="3.4"/>
<polygon points="527.0,230.5 516.5,232.8 519.1,223.2" fill="#800080"/>
<line x1="955.0" y1="281.5" x2="1188.6" y2="240.5" stroke="#800080" stroke-width="3.4"/>
<polygon points="1197.0,239.0 1188.5,245.6 1186.8,235.7" fill="#800080"/>
<line x1="50.0" y1="306.3" x2="173.1" y2="258.9" stroke="#108010" stroke-width="3.3"/>
<polygon points="181.0,255.8 173.9,263.9 170.3,254.6" fill="#108010"/>
<line x1="315.3" y1="342.5" x2="389.3" y2="297.0" stroke="#108010" stroke-width="3.3"/>
<polygon points="396.5,292.5 391.0,301.7 385.8,293.2" fill="#108010"/>
<line x1="570.0" y1="403.3" x2="674.6" y2="342.6" stroke="#108010" stroke-width="3.3"/>
<polygon points="682.0,338.3 676.3,347.4 671.3,338.7" fill="#108010"/>
<line x1="55.0" y1="562.0" x2="149.5" y2="598.5" stroke="#108010" stroke-width="2.6"/>
<polygon points="156.0,601.0 146.9,602.3 150.2,593.9" fill="#108010"/>
<line x1="340.0" y1="560.0" x2="397.0" y2="594.4" stroke="#108010" stroke-width="2.6"/>
<polygon points="403.0,598.0 393.8,597.7 398.5,590.0" fill="#108010"/>
<line x1="554.0" y1="564.0" x2="596.3" y2="594.9" stroke="#108010" stroke-width="2.6"/>
<polygon points="602.0,599.0 592.9,597.9 598.2,590.7" fill="#108010"/>
<polyline points="5.0,462.5 10.0,461.3 45.0,462.5 51.0,480.0 55.0,498.7 71.0,498.7 75.0,518.7 145.0,518.7 150.0,508.7 170.0,507.0 175.0,518.7 195.0,518.7 200.0,503.0 215.5,502.5 220.0,477.5 226.0,473.0 240.0,473.0 246.0,477.5 250.0,468.7 265.0,467.0 290.0,465.5 296.0,461.7 318.0,461.7 341.0,461.7 345.0,498.7 360.5,499.5 365.0,518.7 410.5,518.7 415.0,483.0 435.5,483.0 440.5,475.0 464.0,474.5 471.0,461.7 560.5,461.7 565.0,518.7 630.5,518.7 634.0,497.5 636.0,497.0 653.5,497.5 659.7,518.7 676.0,518.7 681.0,518.0 741.0,518.7 751.0,515.0 758.5,518.0 776.0,517.0 783.5,518.7 806.0,518.7 810.5,503.0 831.0,500.5 836.0,478.0 846.0,478.0 851.0,471.2 856.0,471.2 859.7,510.0 864.7,513.0 876.0,512.5 882.0,517.5 886.0,518.0 891.0,515.0 899.7,515.0 904.7,518.7 926.0,518.7 930.5,483.0 939.7,482.0 944.7,477.0 950.5,477.0 954.0,492.5 955.0,499.5 970.0,500.5 975.0,489.5 980.0,488.0 985.0,472.5 990.0,471.7 995.0,463.0 1000.0,466.0 1008.0,465.7 1010.0,467.5 1016.5,467.5 1020.0,462.0 1035.0,461.7 1040.0,487.5 1050.0,488.0 1055.0,495.0" fill="none" stroke="#800000" stroke-width="2.2" stroke-linejoin="round"/>
<polyline points="5.0,464.5 10.0,461.7 50.0,462.5 57.5,470.0 66.0,472.5 75.0,482.5 81.0,493.7 87.5,493.7 95.0,500.0 100.0,498.7 105.0,502.5 111.0,500.0 120.0,506.0 127.5,508.7 135.0,510.0 140.0,517.5 150.0,508.7 160.0,500.0 165.0,497.5 170.0,498.0 180.0,494.5 185.0,495.0 195.0,489.5 200.0,489.5 210.0,486.0 220.0,478.7 225.0,480.0 235.0,473.7 242.5,473.7 250.0,470.5 260.0,470.5 265.0,467.5 270.0,478.0 275.0,478.0 280.0,471.0 285.0,473.0 295.0,485.0 300.0,485.0 310.0,478.7 318.0,485.0 328.0,489.5 341.7,493.0 350.5,505.0 355.5,513.7 360.5,513.7 365.5,516.2 378.0,515.5 393.0,515.5 400.5,518.7 408.0,517.5 415.5,510.0 423.0,508.7 429.0,506.0 435.5,508.7 445.5,508.0 450.5,506.0 456.7,507.0 461.7,504.5 468.0,505.5 480.5,506.0 488.0,500.0 495.5,493.7 505.5,488.7 510.5,490.0 516.7,494.5 529.0,488.0 535.5,493.7 540.5,497.5 545.5,495.0 550.5,506.0 559.0,507.5 568.0,500.0 575.5,495.0 580.5,498.7 589.0,498.0 595.5,490.5 600.5,491.0 605.5,502.5 610.0,517.5 616.7,515.0 623.0,518.7 630.5,518.7 636.0,519.5 645.5,517.0 651.0,519.5 671.0,518.7 676.0,513.7 684.7,514.5 692.0,508.7 699.7,507.5 711.0,513.0 718.5,514.5 726.0,515.5 732.0,510.0 741.0,501.0 746.0,501.0 751.0,488.0 766.0,488.0 771.0,483.7 776.0,480.5 781.0,473.7 789.7,478.0 799.7,468.7 806.0,472.0 811.0,462.5 818.5,463.0 829.7,462.5 836.0,466.0 843.5,465.5 851.0,462.5 858.5,462.5 869.7,466.0 879.7,462.5 884.7,464.5 891.0,462.5 901.0,463.7 908.5,465.0 916.0,468.7 921.0,468.0 931.0,472.5 938.5,470.0 946.0,463.7 954.0,463.7 964.0,463.7 974.0,467.0 980.0,466.0 986.5,461.7 994.0,467.0 1001.5,472.5 1010.0,478.7 1016.5,479.5 1021.5,481.0 1030.0,480.0 1039.0,472.5 1045.0,467.5 1050.0,472.5 1054.5,472.5" fill="none" stroke="#181010" stroke-width="1" stroke-linejoin="round"/>
<polyline points="5.0,556.7 16.0,556.3 20.0,548.7 35.0,548.3 40.0,543.3 60.0,543.3 65.5,553.0 85.0,553.0 90.0,568.0 110.0,568.0 115.0,565.7 135.0,565.7 140.0,592.0 160.0,592.0 165.0,583.7 185.0,583.7 191.0,600.0 210.0,600.0 215.0,592.5 230.0,592.0 235.0,577.5 255.0,577.5 260.0,580.0 305.0,580.0 310.0,552.5 331.7,552.0 335.5,548.0 350.5,548.0 355.5,563.0 375.5,563.0 380.5,575.0 400.5,575.0 405.5,600.0 425.5,600.0 430.5,570.7 450.5,570.7 455.5,565.0 475.5,565.0 480.5,561.0 500.5,561.0 505.5,556.0 525.5,556.0 530.5,551.7 575.5,551.2 580.5,565.0 595.5,565.5 600.5,590.0 620.5,590.5 627.0,597.5 644.7,598.0 649.7,582.5 669.7,582.5 675.5,600.0 821.0,600.0 824.7,597.5 846.0,597.5 849.7,596.0 864.7,596.0 869.7,600.0 941.0,600.0 944.7,596.0 954.0,596.0 964.0,598.7 981.5,598.7 986.5,597.5 1006.5,597.0 1010.0,595.0 1029.0,594.5 1035.0,589.5 1050.0,589.5 1055.0,593.0 1101.5,593.0" fill="none" stroke="#000" stroke-width="3.2" stroke-linejoin="round"/>
<rect x="0" y="32" width="1" height="742" fill="#b84a08"/>
<rect x="0" y="772" width="1207" height="2" fill="#c0540c"/>
<rect x="1205" y="32" width="2" height="742" fill="#c0540c"/>
<path d="M1201 38.5H1205 M1196 50.5H1205 M1201 63.5H1205 M1201 75.5H1205 M1201 87.5H1205 M1201 99.5H1205 M1196 111.5H1205 M1201 123.5H1205 M1201 136.5H1205 M1201 148.5H1205 M1201 160.5H1205 M1196 172.5H1205 M1201 184.5H1205 M1201 196.5H1205 M1201 209.5H1205 M1201 221.5H1205 M1196 233.5H1205 M1201 245.5H1205 M1201 257.5H1205 M1201 269.5H1205 M1201 282.5H1205 M1196 294.5H1205 M1201 306.5H1205 M1201 318.5H1205 M1201 330.5H1205 M1201 342.5H1205 M1196 354.5H1205 M1201 367.5H1205 M1201 379.5H1205 M1201 391.5H1205 M1201 403.5H1205 M1196 415.5H1205 M1201 427.5H1205 M1201 440.5H1205 M1202 463.5H1205 M1196 476.5H1205 M1202 491.5H1205 M1202 505.5H1205 M1196 519.5H1205 M1202 543.5H1205 M1196 557.5H1205 M1202 572.5H1205 M1202 586.5H1205 M1202 600.5H1205 M1196 625.5H1205 M1202 641.5H1205 M1196 657.5H1205 M1202 673.5H1205 M1202 680.5H1205 M1202 702.5H1205 M1202 717.5H1205 M1196 732.5H1205 M1202 748.5H1205 M1202 763.5H1205" stroke="#c0540c" stroke-width="1.4" fill="none" shape-rendering="crispEdges"/>
<polygon points="79.5,427 88.0,435 79.5,443 71.0,435" fill="none" stroke="#30b0a0" stroke-width="1"/>
<text x="79.5" y="439.5" font-size="12" fill="#30a898" text-anchor="middle">R</text>
<polygon points="294.5,427 303.0,435 294.5,443 286.0,435" fill="none" stroke="#30b0a0" stroke-width="1"/>
<text x="294.5" y="439.5" font-size="12" fill="#30a898" text-anchor="middle">R</text>
<polygon points="619.5,427 628.0,435 619.5,443 611.0,435" fill="none" stroke="#30b0a0" stroke-width="1"/>
<text x="619.5" y="439.5" font-size="12" fill="#30a898" text-anchor="middle">R</text>
<polygon points="1134.5,427 1143.0,435 1134.5,443 1126.0,435" fill="none" stroke="#30b0a0" stroke-width="1"/>
<text x="1134.5" y="439.5" font-size="12" fill="#30a898" text-anchor="middle">?</text>
<text x="480.0" y="12.8" font-size="11" fill="#0c0c0c" text-anchor="start" textLength="314.0" lengthAdjust="spacingAndGlyphs" font-weight="bold" xml:space="preserve">SB2-057:  Sugar #11 (Comb) Cont Liq @ ICE-US  (Daily bars)</text>
<text x="525.5" y="28.5" font-size="12.5" fill="#181818" text-anchor="start" textLength="221.0" lengthAdjust="spacingAndGlyphs">www.TradeNavigator.com © 1999-2016</text>
<text x="101.0" y="44.5" font-size="15" fill="#c01010" text-anchor="start" textLength="113.5" lengthAdjust="spacingAndGlyphs">Lowest Low (9).1</text>
<text x="225.5" y="44.5" font-size="15" fill="#2a8a10" text-anchor="start" textLength="117.5" lengthAdjust="spacingAndGlyphs">Highest High (9).1</text>
<text x="353.5" y="44.5" font-size="15" fill="#e01010" text-anchor="start" textLength="192.5" lengthAdjust="spacingAndGlyphs">AMA Sell Zone (C,10,15,2,30)</text>
<text x="557.0" y="44.5" font-size="15" fill="#1818d0" text-anchor="start" textLength="195.0" lengthAdjust="spacingAndGlyphs">AMA Buy Zone (C,10,15,2,30)</text>
<text x="762.0" y="44.5" font-size="15" fill="#901060" text-anchor="start" textLength="108.0" lengthAdjust="spacingAndGlyphs">AMA (C,10,2,30)</text>
<text x="881.0" y="44.5" font-size="15" fill="#ffff20" text-anchor="start" textLength="123.0" lengthAdjust="spacingAndGlyphs">MovingAvg (C,200)</text>
<text x="1015.0" y="44.5" font-size="15" fill="#101010" text-anchor="start" textLength="172.0" lengthAdjust="spacingAndGlyphs">22.01.2016 = 14,42 (-0,03)</text>
<text x="5.0" y="443.0" font-size="12.5" fill="#202020" text-anchor="start" textLength="97.5" lengthAdjust="spacingAndGlyphs">TradeNavigator.com</text>
<text x="1034.5" y="461.0" font-size="15" fill="#202020" text-anchor="start" textLength="77.5" lengthAdjust="spacingAndGlyphs">OI Stoch 52</text>
<text x="1122.7" y="461.0" font-size="15" fill="#8b1a1a" text-anchor="start" textLength="64.0" lengthAdjust="spacingAndGlyphs">Comm OI</text>
<text x="938.5" y="542.0" font-size="15" fill="#181818" text-anchor="start" textLength="248.0" lengthAdjust="spacingAndGlyphs">COT Commercials Index (Weekly,0.5)</text>
<text x="1096.6" y="623.0" font-size="15" fill="#2a8a2a" text-anchor="start" textLength="89.5" lengthAdjust="spacingAndGlyphs">Professionals</text>
<text x="1027.6" y="703.5" font-size="15" fill="#2a8a2a" text-anchor="start" textLength="159.0" lengthAdjust="spacingAndGlyphs">Commercial Bull Spread</text>
<text x="1213.3" y="55.8" font-size="15" fill="#40e040" text-anchor="start" textLength="34.4" lengthAdjust="spacingAndGlyphs">16,00</text>
<text x="1213.3" y="116.8" font-size="15" fill="#40e040" text-anchor="start" textLength="34.4" lengthAdjust="spacingAndGlyphs">15,00</text>
<text x="1213.3" y="177.8" font-size="15" fill="#40e040" text-anchor="start" textLength="34.4" lengthAdjust="spacingAndGlyphs">14,00</text>
<text x="1213.3" y="238.8" font-size="15" fill="#40e040" text-anchor="start" textLength="34.4" lengthAdjust="spacingAndGlyphs">13,00</text>
<text x="1213.3" y="299.8" font-size="15" fill="#40e040" text-anchor="start" textLength="34.4" lengthAdjust="spacingAndGlyphs">12,00</text>
<text x="1213.3" y="359.8" font-size="15" fill="#40e040" text-anchor="start" textLength="34.4" lengthAdjust="spacingAndGlyphs">11,00</text>
<text x="1213.3" y="420.8" font-size="15" fill="#40e040" text-anchor="start" textLength="34.4" lengthAdjust="spacingAndGlyphs">10,00</text>
<text x="1213.0" y="525.8" font-size="15" fill="#40e040" text-anchor="start">0</text>
<text x="1213.0" y="563.3" font-size="15" fill="#40e040" text-anchor="start">75</text>
<text x="1212.0" y="631.0" font-size="15" fill="#40e040" text-anchor="start" textLength="43.0" lengthAdjust="spacingAndGlyphs">0,2000</text>
<text x="1212.0" y="661.0" font-size="15" fill="#40e040" text-anchor="start">0</text>
<text x="1212.0" y="739.0" font-size="15" fill="#40e040" text-anchor="start">0</text>
<rect x="1207" y="95.3" width="36" height="17.4" fill="#0a800a"/>
<text x="1207.8" y="109.5" font-size="15" fill="#ffe0a0" text-anchor="start" textLength="34.4" lengthAdjust="spacingAndGlyphs">15,12</text>
<rect x="1207" y="121" width="36" height="16.8" fill="#800080"/>
<text x="1207.8" y="134.6" font-size="15" fill="#ffc8c8" text-anchor="start" textLength="34.4" lengthAdjust="spacingAndGlyphs">14,69</text>
<rect x="1207" y="138" width="36" height="17.4" fill="#000000"/>
<text x="1207.8" y="152.2" font-size="15" fill="#ffe0b0" text-anchor="start" textLength="34.4" lengthAdjust="spacingAndGlyphs">14,42</text>
<rect x="1207" y="167" width="36" height="17.6" fill="#c00000"/>
<text x="1207.8" y="181.4" font-size="15" fill="#ffe0b0" text-anchor="start" textLength="34.4" lengthAdjust="spacingAndGlyphs">13,93</text>
<rect x="1207" y="225" width="36" height="17.6" fill="#ffff00"/>
<text x="1207.8" y="239.4" font-size="15" fill="#ffc080" text-anchor="start" textLength="34.4" lengthAdjust="spacingAndGlyphs">12,99</text>
<rect x="1207" y="463" width="36" height="18" fill="#000000"/>
<text x="1207.8" y="477.8" font-size="15" fill="#ffe0b0" text-anchor="start" textLength="34.4" lengthAdjust="spacingAndGlyphs">83,59</text>
<rect x="1207" y="486" width="36" height="18" fill="#800000"/>
<text x="1207.8" y="500.8" font-size="15" fill="#ffe0b0" text-anchor="start" textLength="34.4" lengthAdjust="spacingAndGlyphs">42,88</text>
<rect x="1207" y="584.5" width="36" height="18" fill="#000000"/>
<text x="1207.8" y="599.3" font-size="15" fill="#ffe0b0" text-anchor="start" textLength="34.4" lengthAdjust="spacingAndGlyphs">12,69</text>
<rect x="1207.5" y="660.5" width="48" height="16.6" fill="#0a800a"/>
<text x="1208.3" y="673.9" font-size="15" fill="#ffe0b0" text-anchor="start" textLength="46.4" lengthAdjust="spacingAndGlyphs">-0,0721</text>
<rect x="1207.5" y="715" width="43.5" height="15.8" fill="#0a800a"/>
<text x="1208.3" y="727.6" font-size="15" fill="#ffe0b0" text-anchor="start" textLength="41.9" lengthAdjust="spacingAndGlyphs">4,1538</text>
<text x="32.0" y="789.0" font-size="15" fill="#40e040" text-anchor="start" textLength="41.8" lengthAdjust="spacingAndGlyphs">Apr.15</text>
<text x="137.0" y="789.0" font-size="15" fill="#40e040" text-anchor="start" textLength="43.4" lengthAdjust="spacingAndGlyphs">Mai.15</text>
<text x="237.0" y="789.0" font-size="15" fill="#40e040" text-anchor="start" textLength="43.1" lengthAdjust="spacingAndGlyphs">Jun.15</text>
<text x="347.2" y="789.0" font-size="15" fill="#40e040" text-anchor="start" textLength="38.5" lengthAdjust="spacingAndGlyphs">Jul.15</text>
<text x="457.0" y="789.0" font-size="15" fill="#40e040" text-anchor="start" textLength="44.4" lengthAdjust="spacingAndGlyphs">Aug.15</text>
<text x="562.0" y="789.0" font-size="15" fill="#40e040" text-anchor="start" textLength="45.2" lengthAdjust="spacingAndGlyphs">Sep.15</text>
<text x="667.0" y="789.0" font-size="15" fill="#40e040" text-anchor="start" textLength="43.4" lengthAdjust="spacingAndGlyphs">Okt.15</text>
<text x="777.3" y="789.0" font-size="15" fill="#40e040" text-anchor="start" textLength="46.0" lengthAdjust="spacingAndGlyphs">Nov.15</text>
<text x="877.0" y="789.0" font-size="15" fill="#40e040" text-anchor="start" textLength="46.2" lengthAdjust="spacingAndGlyphs">Dez.15</text>
<text x="987.6" y="789.0" font-size="15" fill="#40e040" text-anchor="start" textLength="42.6" lengthAdjust="spacingAndGlyphs">Jän.16</text>
<text x="1082.4" y="789.0" font-size="15" fill="#40e040" text-anchor="start" textLength="43.4" lengthAdjust="spacingAndGlyphs">Feb.16</text>
<text x="1187.8" y="789.0" font-size="15" fill="#40e040" text-anchor="start" textLength="45.0" lengthAdjust="spacingAndGlyphs">Mär.16</text>
<text x="0.5" y="805.5" font-size="13.5" fill="#101010" text-anchor="start" textLength="86.0" lengthAdjust="spacingAndGlyphs">Copyright Zyxa</text>
<polygon points="1217.5,783.5 1231.5,774.5 1231.5,778 1262.7,778 1262.7,788.8 1231.5,788.8 1231.5,792.5" fill="#f00000" stroke="#200000" stroke-width="1"/>
<g fill="#e6cf1e" stroke="#8a7a10" stroke-width="0.4">
<rect x="4" y="11" width="12" height="5.5" rx="1"/>
<path d="M16.5 5 Q19 1.5 22 5 L22.5 24 L24.5 34.3 L14 34.3 L16.5 24 Z"/>
<path d="M4 24 Q19 36 35 24 L32 21.5 Q19 31 6.5 21.5 Z"/>
</g>
<path d="M19 8 L10 24 M20 8 L29 24 M11 20 H28 M23 12 L27 11 L28 19" stroke="#e6d850" stroke-width="1.6" fill="none"/>
</svg>
</body></html>
